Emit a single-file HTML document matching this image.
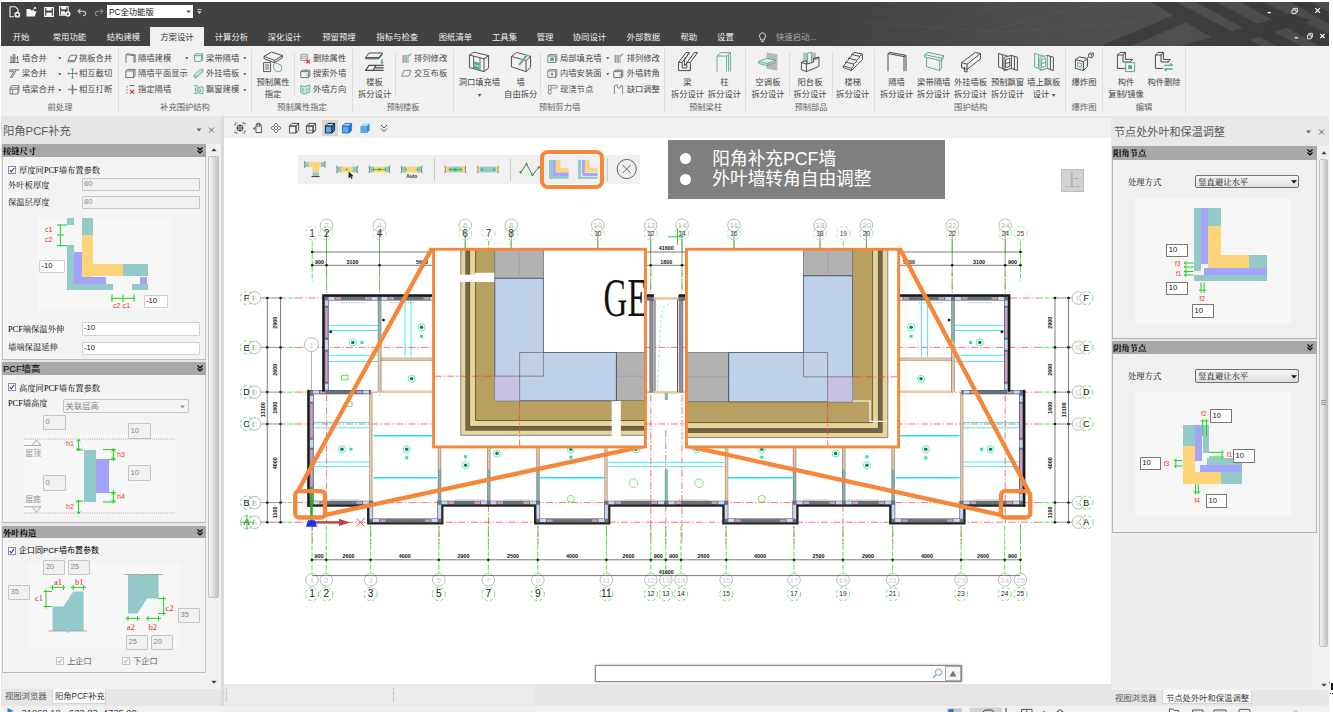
<!DOCTYPE html><html lang="zh"><head><meta charset="utf-8"><title>PC</title><style>
*{box-sizing:border-box;margin:0;padding:0}
html,body{width:1333px;height:712px;overflow:hidden;background:#fff}
body{position:relative;font-family:"Liberation Sans","Noto Sans CJK SC",sans-serif;font-size:8.3px;color:#333;line-height:1}
.a{position:absolute}
.t{position:absolute;white-space:nowrap;line-height:10px;height:10px}
.c{transform:translateX(-50%)}
svg{position:absolute;overflow:visible}
</style></head><body>
<div class="a" style="left:1px;top:2px;width:1328px;height:44px;background:#424242"></div>
<div class="a" style="left:830px;top:2px;width:499px;height:44px;background:linear-gradient(90deg,rgba(255,255,255,0),rgba(255,255,255,0.055) 35%,rgba(255,255,255,0.075) 70%,rgba(255,255,255,0.05))"></div>
<svg style="left:1px;top:2px" width="1328" height="44" viewBox="0 0 1328 44"><g fill="#000" opacity="0.22"><polygon points="1150,0 1175,0 1260,44 1225,44"/><polygon points="1195,0 1215,0 1300,44 1275,44"/><polygon points="1240,0 1262,0 1328,32 1328,44 1318,44"/><polygon points="1290,0 1310,0 1328,10 1328,22"/><polygon points="1100,44 1180,10 1200,14 1130,44"/><polygon points="1180,44 1290,12 1310,18 1230,44"/></g><g stroke="#fff" stroke-width="0.6" opacity="0.07" fill="none"><path d="M880 44 L1010 0 M930 44 L1100 0 M990 0 L1060 44 M1040 0 L1130 44 M860 20 L1000 30 L1140 20"/></g></svg>
<div class="a" style="left:150px;top:27px;width:54px;height:19px;background:#f1f1f1"></div>
<div class="t c" style="left:21.0px;top:32px;color:#f0f0f0;font-size:8.4px">开始</div>
<div class="t c" style="left:69.5px;top:32px;color:#f0f0f0;font-size:8.4px">常用功能</div>
<div class="t c" style="left:123.5px;top:32px;color:#f0f0f0;font-size:8.4px">结构建模</div>
<div class="t c" style="left:177.0px;top:32px;color:#333;font-size:8.4px">方案设计</div>
<div class="t c" style="left:231.5px;top:32px;color:#f0f0f0;font-size:8.4px">计算分析</div>
<div class="t c" style="left:284.5px;top:32px;color:#f0f0f0;font-size:8.4px">深化设计</div>
<div class="t c" style="left:339.0px;top:32px;color:#f0f0f0;font-size:8.4px">预留预埋</div>
<div class="t c" style="left:397.3px;top:32px;color:#f0f0f0;font-size:8.4px">指标与检查</div>
<div class="t c" style="left:455.5px;top:32px;color:#f0f0f0;font-size:8.4px">图纸清单</div>
<div class="t c" style="left:504.5px;top:32px;color:#f0f0f0;font-size:8.4px">工具集</div>
<div class="t c" style="left:545.0px;top:32px;color:#f0f0f0;font-size:8.4px">管理</div>
<div class="t c" style="left:589.5px;top:32px;color:#f0f0f0;font-size:8.4px">协同设计</div>
<div class="t c" style="left:643.5px;top:32px;color:#f0f0f0;font-size:8.4px">外部数据</div>
<div class="t c" style="left:688.8px;top:32px;color:#f0f0f0;font-size:8.4px">帮助</div>
<div class="t c" style="left:725.4px;top:32px;color:#f0f0f0;font-size:8.4px">设置</div>
<div class="t" style="left:776px;top:32px;color:#a8a8a8;font-size:8.4px">快速启动...</div>
<div class="a" style="left:1px;top:46px;width:1328px;height:70px;background:#f1f1f1"></div>
<div class="a" style="left:117.5px;top:49px;width:1px;height:64px;background:#dcdcdc"></div>
<div class="a" style="left:250.5px;top:49px;width:1px;height:64px;background:#dcdcdc"></div>
<div class="a" style="left:351.5px;top:49px;width:1px;height:64px;background:#dcdcdc"></div>
<div class="a" style="left:452.5px;top:49px;width:1px;height:64px;background:#dcdcdc"></div>
<div class="a" style="left:663.5px;top:49px;width:1px;height:64px;background:#dcdcdc"></div>
<div class="a" style="left:745.2px;top:49px;width:1px;height:64px;background:#dcdcdc"></div>
<div class="a" style="left:874.3px;top:49px;width:1px;height:64px;background:#dcdcdc"></div>
<div class="a" style="left:1065.0px;top:49px;width:1px;height:64px;background:#dcdcdc"></div>
<div class="a" style="left:1102.0px;top:49px;width:1px;height:64px;background:#dcdcdc"></div>
<div class="a" style="left:1185.0px;top:49px;width:1px;height:64px;background:#dcdcdc"></div>
<div class="a" style="left:293.5px;top:53px;width:1px;height:43px;background:#dcdcdc"></div>
<div class="a" style="left:394.5px;top:53px;width:1px;height:43px;background:#dcdcdc"></div>
<div class="a" style="left:540.3px;top:53px;width:1px;height:43px;background:#dcdcdc"></div>
<div class="a" style="left:788.5px;top:53px;width:1px;height:43px;background:#dcdcdc"></div>
<div class="a" style="left:831.5px;top:53px;width:1px;height:43px;background:#dcdcdc"></div>
<div class="t c" style="left:60px;top:102px;color:#666">前处理</div>
<div class="t c" style="left:185px;top:102px;color:#666">补充围护结构</div>
<div class="t c" style="left:302px;top:102px;color:#666">预制属性指定</div>
<div class="t c" style="left:403px;top:102px;color:#666">预制楼板</div>
<div class="t c" style="left:559.5px;top:102px;color:#666">预制剪力墙</div>
<div class="t c" style="left:705.6px;top:102px;color:#666">预制梁柱</div>
<div class="t c" style="left:811px;top:102px;color:#666">预制部品</div>
<div class="t c" style="left:970.7px;top:102px;color:#666">围护结构</div>
<div class="t c" style="left:1084px;top:102px;color:#666">爆炸图</div>
<div class="t c" style="left:1144px;top:102px;color:#666">编辑</div>
<div class="t" style="left:22px;top:52.5px;color:#4a4a4a">墙合并</div>
<div class="t" style="left:22px;top:68px;color:#4a4a4a">梁合并</div>
<div class="t" style="left:22px;top:84px;color:#4a4a4a">墙梁合并</div>
<div class="t" style="left:79px;top:52.5px;color:#4a4a4a">挑板合并</div>
<div class="t" style="left:79px;top:68px;color:#4a4a4a">相互截切</div>
<div class="t" style="left:79px;top:84px;color:#4a4a4a">相互打断</div>
<div class="t" style="left:138px;top:52.5px;color:#4a4a4a">隔墙建模</div>
<div class="t" style="left:138px;top:68px;color:#4a4a4a">隔墙平面显示</div>
<div class="t" style="left:138px;top:84px;color:#4a4a4a">指定隔墙</div>
<div class="t" style="left:206px;top:52.5px;color:#4a4a4a">梁带隔墙</div>
<div class="t" style="left:206px;top:68px;color:#4a4a4a">外挂墙板</div>
<div class="t" style="left:206px;top:84px;color:#4a4a4a">飘窗建模</div>
<div class="t" style="left:313px;top:52.5px;color:#4a4a4a">删除属性</div>
<div class="t" style="left:313px;top:68px;color:#4a4a4a">搜索外墙</div>
<div class="t" style="left:313px;top:84px;color:#4a4a4a">外墙方向</div>
<div class="t" style="left:414px;top:52.5px;color:#4a4a4a">排列修改</div>
<div class="t" style="left:414px;top:68px;color:#4a4a4a">交互布板</div>
<div class="t" style="left:560px;top:52.5px;color:#4a4a4a">局部填充墙</div>
<div class="t" style="left:560px;top:68px;color:#4a4a4a">内墙安装面</div>
<div class="t" style="left:560px;top:84px;color:#4a4a4a">现浇节点</div>
<div class="t" style="left:626.7px;top:52.5px;color:#4a4a4a">排列修改</div>
<div class="t" style="left:626.7px;top:68px;color:#4a4a4a">外墙转角</div>
<div class="t" style="left:626.7px;top:84px;color:#4a4a4a">缺口调整</div>
<div class="t c" style="left:273px;top:77px;color:#444">预制属性</div>
<div class="t c" style="left:273px;top:89px;color:#444">指定</div>
<div class="t c" style="left:374.6px;top:77px;color:#444">楼板</div>
<div class="t c" style="left:374.6px;top:89px;color:#444">拆分设计</div>
<div class="t c" style="left:479.4px;top:77px;color:#444">洞口填充墙</div>
<div class="t c" style="left:479.4px;top:89px;color:#444"><span style="font-size:5.5px">▾</span></div>
<div class="t c" style="left:520.7px;top:77px;color:#444">墙</div>
<div class="t c" style="left:520.7px;top:89px;color:#444">自由拆分</div>
<div class="t c" style="left:687.5px;top:77px;color:#444">梁</div>
<div class="t c" style="left:687.5px;top:89px;color:#444">拆分设计</div>
<div class="t c" style="left:724.4px;top:77px;color:#444">柱</div>
<div class="t c" style="left:724.4px;top:89px;color:#444">拆分设计</div>
<div class="t c" style="left:768px;top:77px;color:#444">空调板</div>
<div class="t c" style="left:768px;top:89px;color:#444">拆分设计</div>
<div class="t c" style="left:810px;top:77px;color:#444">阳台板</div>
<div class="t c" style="left:810px;top:89px;color:#444">拆分设计</div>
<div class="t c" style="left:852.7px;top:77px;color:#444">楼梯</div>
<div class="t c" style="left:852.7px;top:89px;color:#444">拆分设计</div>
<div class="t c" style="left:896.6px;top:77px;color:#444">隔墙</div>
<div class="t c" style="left:896.6px;top:89px;color:#444">拆分设计</div>
<div class="t c" style="left:933.7px;top:77px;color:#444">梁带隔墙</div>
<div class="t c" style="left:933.7px;top:89px;color:#444">拆分设计</div>
<div class="t c" style="left:970.5px;top:77px;color:#444">外挂墙板</div>
<div class="t c" style="left:970.5px;top:89px;color:#444">拆分设计</div>
<div class="t c" style="left:1007.5px;top:77px;color:#444">预制飘窗</div>
<div class="t c" style="left:1007.5px;top:89px;color:#444">拆分设计</div>
<div class="t c" style="left:1043.7px;top:77px;color:#444">墙上飘板</div>
<div class="t c" style="left:1043.7px;top:89px;color:#444">设计 <span style="font-size:5.5px">▾</span></div>
<div class="t c" style="left:1084px;top:77px;color:#444">爆炸图</div>
<div class="t c" style="left:1126px;top:77px;color:#444">构件</div>
<div class="t c" style="left:1126px;top:89px;color:#444">复制/镜像</div>
<div class="t c" style="left:1164px;top:77px;color:#444">构件删除</div>
<div class="a" style="left:1.0px;top:116.0px;width:1328.0px;height:2.3px;background:#e4e4e4;"></div>
<div class="a" style="left:224.0px;top:118.3px;width:887.0px;height:19.9px;background:#f0f0f0;"></div>
<div class="a" style="left:224.0px;top:138.2px;width:887.0px;height:545.6px;background:#fff;"></div>
<div class="a" style="left:224.0px;top:683.8px;width:887.0px;height:22.2px;background:#e4e4e4;"></div>
<div class="a" style="left:224.0px;top:683.8px;width:311.0px;height:22.2px;background:#ebebeb;"></div>
<div class="a" style="left:1.0px;top:706.0px;width:1328.0px;height:6.0px;background:#f0f0f0;"></div>
<svg style="left:224px;top:684px" width="400" height="21" viewBox="224 684 400 21"><path d="M226.3 688 V703 M393.5 688 V703" stroke="#999" stroke-width="1" stroke-dasharray="1 1.5"/></svg>
<svg style="left:224px;top:138.2px" width="887" height="545.8" viewBox="224 138.2 887 545.8" font-family="Liberation Sans, sans-serif"><g stroke="#f03a3a" stroke-width="0.7" stroke-dasharray="7 2 1.5 2" fill="none"><path d="M296 298.2 H323 M1010 298.2 H1038 M296 347.6 H1038 M296 392.3 H1038 M296 424.2 H1038 M296 502.8 H1038 M296 522.4 H1038"/><path d="M326.6 270 V523"/><path d="M379.5 270 V396"/><path d="M650.8 270 V545"/><path d="M682 270 V545"/><path d="M952.2 270 V396"/><path d="M1005.2 270 V523"/><path d="M370.8 430 V545"/><path d="M439.2 430 V545"/><path d="M488.5 430 V545"/><path d="M538 430 V545"/><path d="M606.4 430 V545"/><path d="M665.8 430 V545"/><path d="M725.8 430 V545"/><path d="M794 430 V545"/><path d="M843 430 V545"/><path d="M892.8 430 V545"/><path d="M961.3 430 V545"/><path d="M312.2 524 V545 M1020.5 524 V545"/></g><g><g stroke="#20e0f0" stroke-width="0.8" fill="none"><path d="M329 325.6 H378 M329 330.7 H378 M329 355.5 H378 M329 361.7 H378 M405 298 V357 M411 298 V357"/><path d="M312 422.7 H369 M312 428 H369 M312 462.2 H369 M312 466.8 H369"/><path d="M608 462.6 H666 M608 466.8 H666"/></g><g stroke="#20e0f0" stroke-width="1.4" fill="none"><path d="M373 436 H437 M373 478 H437 M540 478 H605"/></g><path d="M657 393 C660 340 660 320 663 308 L672 302" stroke="#60e8f0" stroke-width="0.8" stroke-dasharray="3 2" fill="none"/><g stroke="#e9c9a4" stroke-width="2.6" fill="none"><path d="M380 359.5 H436 M379.8 342 V392 M381 392 H436 M370.8 393 V503 M439.5 440 V470 M488.8 440 V470 M538 440 V470 M606 440 V503 M654 298.5 H679 M654 392.5 H679"/></g><g stroke="#8a7a6a" stroke-width="0.5" fill="none"><path d="M380 358.2 H436 M380 360.8 H436 M369.5 393 V503 M372.1 393 V503 M604.7 440 V503 M607.3 440 V503"/></g><g stroke="#86b4b4" stroke-width="2.6" fill="none"><path d="M379.5 300 V342 M439.5 470 V503 M488.8 470 V503 M538 470 V503 M666 470 V503 M666 393 V400"/></g><g stroke="#555" stroke-width="0.5" fill="none"><path d="M378.2 300 V392 M381.1 300 V392 M438.2 440 V503 M440.8 440 V503 M487.5 440 V503 M490.1 440 V503 M536.7 440 V503 M539.3 440 V503"/></g><g stroke="#9a8aa0" stroke-width="3" fill="none"><path d="M651.5 298 V393"/></g><g stroke="#444" stroke-width="0.6" fill="none"><path d="M649.8 298 V393 M653.2 298 V393"/></g><g stroke="#4a4a4a" stroke-width="4.2" fill="none" stroke-linejoin="miter"><path d="M326.5 392 V298.6 H654"/><path d="M311.5 394 V502"/><path d="M309.5 392.3 H371"/><path d="M309.5 503 H371 V520.8 H439.5 V503 H538 V520.8 H606.4 V503 H667"/></g><g stroke="#66737f" stroke-width="3.4" fill="none" stroke-linejoin="miter"><path d="M326.5 392 V298.6 H654"/><path d="M311.5 394 V502"/><path d="M309.5 392.3 H371"/><path d="M309.5 503 H371 V520.8 H439.5 V503 H538 V520.8 H606.4 V503 H667"/></g><path d="M313.5 503 h6 M369 503 h-6 M373 520.8 h6 M437.5 520.8 h-6 M441.5 503 h6 M487 503 h-6 M490.5 503 h6 M536 503 h-6 M540 520.8 h6 M604.4 520.8 h-6 M608.4 503 h6 M664 503 h-6 M313 392.3 h6 M369 392.3 h-6 M328.5 298.6 h6 M377.5 298.6 h-6 M381.5 298.6 h6 M436 298.6 h-6 M371 505 V519 M439.5 505 V519 M538 505 V519 M606.4 505 V519 M326.5 300.6 V306 M326.5 340 V350 M326.5 384 V390 M311.5 396 V402 M311.5 440 V448 M311.5 494 V501" stroke="#c8d4f8" stroke-width="3" fill="none"/><path d="M320.5 503 h5.5 M362 503 h-5.5 M380 520.8 h5.5 M430.5 520.8 h-5.5 M448.5 503 h5.5 M480 503 h-5.5 M497.5 503 h5.5 M529 503 h-5.5 M547 520.8 h5.5 M597.4 520.8 h-5.5 M615.4 503 h5.5 M657 503 h-5.5 M320 392.3 h5.5 M362 392.3 h-5.5 M335.5 298.6 h5.5 M370.5 298.6 h-5.5 M388.5 298.6 h5.5 M429 298.6 h-5.5 M326.5 308 V338 M326.5 352 V382 M311.5 404 V438 M311.5 450 V492" stroke="#cf9fc8" stroke-width="2.4" fill="none"/><g stroke="#1a1a1a" stroke-width="2.4" fill="none" stroke-linejoin="miter"><path d="M323.4 392 V295.7 H654"/><path d="M308.4 390 V507"/></g><g stroke="#2a261c" stroke-width="2.1" fill="none" stroke-linejoin="miter"><path d="M307.3 505.9 H368.1 V523.7 H442.4 V505.9 H535.1 V523.7 H609.3 V505.9 H667"/></g><path d="M655 300 V392" stroke="#222" stroke-width="0.8" fill="none"/><circle cx="352.8" cy="342.7" r="3.6" fill="none" stroke="#20e0b0" stroke-width="0.7"/><circle cx="352.8" cy="342.7" r="1.8" fill="#108060"/><circle cx="421.5" cy="327.5" r="3.6" fill="none" stroke="#20e0b0" stroke-width="0.7"/><circle cx="421.5" cy="327.5" r="1.8" fill="#108060"/><circle cx="411.6" cy="379" r="3.6" fill="none" stroke="#20e0b0" stroke-width="0.7"/><circle cx="411.6" cy="379" r="1.8" fill="#108060"/><circle cx="342" cy="449.4" r="3.6" fill="none" stroke="#20e0b0" stroke-width="0.7"/><circle cx="342" cy="449.4" r="1.8" fill="#108060"/><circle cx="406.8" cy="449.4" r="3.6" fill="none" stroke="#20e0b0" stroke-width="0.7"/><circle cx="406.8" cy="449.4" r="1.8" fill="#108060"/><circle cx="465.6" cy="465.4" r="3.6" fill="none" stroke="#20e0b0" stroke-width="0.7"/><circle cx="465.6" cy="465.4" r="1.8" fill="#108060"/><circle cx="497" cy="453.6" r="3.6" fill="none" stroke="#20e0b0" stroke-width="0.7"/><circle cx="497" cy="453.6" r="1.8" fill="#108060"/><circle cx="570.8" cy="449.5" r="3.6" fill="none" stroke="#20e0b0" stroke-width="0.7"/><circle cx="570.8" cy="449.5" r="1.8" fill="#108060"/><circle cx="636" cy="449.5" r="3.6" fill="none" stroke="#20e0b0" stroke-width="0.7"/><circle cx="636" cy="449.5" r="1.8" fill="#108060"/><rect x="360.5" y="341.2" width="3" height="3" fill="#20e0b0"/><rect x="420.0" y="335.0" width="3" height="3" fill="#20e0b0"/><rect x="349.5" y="447.9" width="3" height="3" fill="#20e0b0"/><rect x="405.3" y="456.5" width="3" height="3" fill="#20e0b0"/><rect x="464.1" y="455.5" width="3" height="3" fill="#20e0b0"/><rect x="495.5" y="444.0" width="3" height="3" fill="#20e0b0"/><rect x="569.3" y="456.0" width="3" height="3" fill="#20e0b0"/><rect x="341.6" y="375.5" width="6.4" height="4.5" fill="none" stroke="#30e030" stroke-width="0.8"/><rect x="346" y="402" width="6" height="4.5" fill="none" stroke="#30e030" stroke-width="0.8"/><circle cx="633.5" cy="483.4" r="4.3" fill="none" stroke="#60e040" stroke-width="0.8"/><circle cx="570.8" cy="499" r="3.4" fill="none" stroke="#60e040" stroke-width="0.8"/><circle cx="330.7" cy="332" r="1.4" fill="#111"/><circle cx="383.5" cy="320.3" r="1.4" fill="#111"/><g stroke="#999" stroke-width="0.7" stroke-dasharray="1.5 1" fill="none"><path d="M341 303 H366 M390 303 H415 M330 500 H360 M386 519 H416 M455 500 H485 M505 500 H530 M555 519 H585 M625 500 H655"/></g></g><g transform="translate(1332.6,0) scale(-1,1)"><g stroke="#20e0f0" stroke-width="0.8" fill="none"><path d="M329 325.6 H378 M329 330.7 H378 M329 355.5 H378 M329 361.7 H378 M405 298 V357 M411 298 V357"/><path d="M312 422.7 H369 M312 428 H369 M312 462.2 H369 M312 466.8 H369"/><path d="M608 462.6 H666 M608 466.8 H666"/></g><g stroke="#20e0f0" stroke-width="1.4" fill="none"><path d="M373 436 H437 M373 478 H437 M540 478 H605"/></g><g stroke="#e9c9a4" stroke-width="2.6" fill="none"><path d="M380 359.5 H436 M379.8 342 V392 M381 392 H436 M370.8 393 V503 M439.5 440 V470 M488.8 440 V470 M538 440 V470 M606 440 V503 M654 298.5 H679 M654 392.5 H679"/></g><g stroke="#8a7a6a" stroke-width="0.5" fill="none"><path d="M380 358.2 H436 M380 360.8 H436 M369.5 393 V503 M372.1 393 V503 M604.7 440 V503 M607.3 440 V503"/></g><g stroke="#86b4b4" stroke-width="2.6" fill="none"><path d="M379.5 300 V342 M439.5 470 V503 M488.8 470 V503 M538 470 V503 M666 470 V503 M666 393 V400"/></g><g stroke="#555" stroke-width="0.5" fill="none"><path d="M378.2 300 V392 M381.1 300 V392 M438.2 440 V503 M440.8 440 V503 M487.5 440 V503 M490.1 440 V503 M536.7 440 V503 M539.3 440 V503"/></g><g stroke="#9a8aa0" stroke-width="3" fill="none"><path d="M651.5 298 V393"/></g><g stroke="#444" stroke-width="0.6" fill="none"><path d="M649.8 298 V393 M653.2 298 V393"/></g><g stroke="#4a4a4a" stroke-width="4.2" fill="none" stroke-linejoin="miter"><path d="M326.5 392 V298.6 H654"/><path d="M311.5 394 V502"/><path d="M309.5 392.3 H371"/><path d="M309.5 503 H371 V520.8 H439.5 V503 H538 V520.8 H606.4 V503 H667"/></g><g stroke="#66737f" stroke-width="3.4" fill="none" stroke-linejoin="miter"><path d="M326.5 392 V298.6 H654"/><path d="M311.5 394 V502"/><path d="M309.5 392.3 H371"/><path d="M309.5 503 H371 V520.8 H439.5 V503 H538 V520.8 H606.4 V503 H667"/></g><path d="M313.5 503 h6 M369 503 h-6 M373 520.8 h6 M437.5 520.8 h-6 M441.5 503 h6 M487 503 h-6 M490.5 503 h6 M536 503 h-6 M540 520.8 h6 M604.4 520.8 h-6 M608.4 503 h6 M664 503 h-6 M313 392.3 h6 M369 392.3 h-6 M328.5 298.6 h6 M377.5 298.6 h-6 M381.5 298.6 h6 M436 298.6 h-6 M371 505 V519 M439.5 505 V519 M538 505 V519 M606.4 505 V519 M326.5 300.6 V306 M326.5 340 V350 M326.5 384 V390 M311.5 396 V402 M311.5 440 V448 M311.5 494 V501" stroke="#c8d4f8" stroke-width="3" fill="none"/><path d="M320.5 503 h5.5 M362 503 h-5.5 M380 520.8 h5.5 M430.5 520.8 h-5.5 M448.5 503 h5.5 M480 503 h-5.5 M497.5 503 h5.5 M529 503 h-5.5 M547 520.8 h5.5 M597.4 520.8 h-5.5 M615.4 503 h5.5 M657 503 h-5.5 M320 392.3 h5.5 M362 392.3 h-5.5 M335.5 298.6 h5.5 M370.5 298.6 h-5.5 M388.5 298.6 h5.5 M429 298.6 h-5.5 M326.5 308 V338 M326.5 352 V382 M311.5 404 V438 M311.5 450 V492" stroke="#cf9fc8" stroke-width="2.4" fill="none"/><g stroke="#1a1a1a" stroke-width="2.4" fill="none" stroke-linejoin="miter"><path d="M323.4 392 V295.7 H654"/><path d="M308.4 390 V507"/></g><g stroke="#2a261c" stroke-width="2.1" fill="none" stroke-linejoin="miter"><path d="M307.3 505.9 H368.1 V523.7 H442.4 V505.9 H535.1 V523.7 H609.3 V505.9 H667"/></g><path d="M655 300 V392" stroke="#222" stroke-width="0.8" fill="none"/><circle cx="352.8" cy="342.7" r="3.6" fill="none" stroke="#20e0b0" stroke-width="0.7"/><circle cx="352.8" cy="342.7" r="1.8" fill="#108060"/><circle cx="421.5" cy="327.5" r="3.6" fill="none" stroke="#20e0b0" stroke-width="0.7"/><circle cx="421.5" cy="327.5" r="1.8" fill="#108060"/><circle cx="411.6" cy="379" r="3.6" fill="none" stroke="#20e0b0" stroke-width="0.7"/><circle cx="411.6" cy="379" r="1.8" fill="#108060"/><circle cx="342" cy="449.4" r="3.6" fill="none" stroke="#20e0b0" stroke-width="0.7"/><circle cx="342" cy="449.4" r="1.8" fill="#108060"/><circle cx="406.8" cy="449.4" r="3.6" fill="none" stroke="#20e0b0" stroke-width="0.7"/><circle cx="406.8" cy="449.4" r="1.8" fill="#108060"/><circle cx="465.6" cy="465.4" r="3.6" fill="none" stroke="#20e0b0" stroke-width="0.7"/><circle cx="465.6" cy="465.4" r="1.8" fill="#108060"/><circle cx="497" cy="453.6" r="3.6" fill="none" stroke="#20e0b0" stroke-width="0.7"/><circle cx="497" cy="453.6" r="1.8" fill="#108060"/><circle cx="570.8" cy="449.5" r="3.6" fill="none" stroke="#20e0b0" stroke-width="0.7"/><circle cx="570.8" cy="449.5" r="1.8" fill="#108060"/><circle cx="636" cy="449.5" r="3.6" fill="none" stroke="#20e0b0" stroke-width="0.7"/><circle cx="636" cy="449.5" r="1.8" fill="#108060"/><rect x="360.5" y="341.2" width="3" height="3" fill="#20e0b0"/><rect x="420.0" y="335.0" width="3" height="3" fill="#20e0b0"/><rect x="349.5" y="447.9" width="3" height="3" fill="#20e0b0"/><rect x="405.3" y="456.5" width="3" height="3" fill="#20e0b0"/><rect x="464.1" y="455.5" width="3" height="3" fill="#20e0b0"/><rect x="495.5" y="444.0" width="3" height="3" fill="#20e0b0"/><rect x="569.3" y="456.0" width="3" height="3" fill="#20e0b0"/><circle cx="633.5" cy="483.4" r="4.3" fill="none" stroke="#60e040" stroke-width="0.8"/><circle cx="570.8" cy="499" r="3.4" fill="none" stroke="#60e040" stroke-width="0.8"/><circle cx="330.7" cy="332" r="1.4" fill="#111"/><circle cx="383.5" cy="320.3" r="1.4" fill="#111"/><g stroke="#999" stroke-width="0.7" stroke-dasharray="1.5 1" fill="none"><path d="M341 303 H366 M390 303 H415 M330 500 H360 M386 519 H416 M455 500 H485 M505 500 H530 M555 519 H585 M625 500 H655"/></g></g><circle cx="312.2" cy="233.3" r="6.6" fill="none" stroke="#6fe46f" stroke-width="0.65" stroke-dasharray="3 2.5"/><path d="M312.2 241 V281" stroke="#30d830" stroke-width="0.8" stroke-dasharray="5 1.5"/><text x="312.2" y="237.5" font-size="10.2" fill="#3a3a3a" text-anchor="middle">1</text><circle cx="326.5" cy="225.5" r="6.3" fill="#fff" stroke="#aaa" stroke-width="0.8"/><text x="326.5" y="228.5" font-size="8" fill="#bbb" text-anchor="middle">2</text><path d="M326.5 231.8 V266" stroke="#666" stroke-width="0.7"/><circle cx="326.5" cy="233.3" r="6.6" fill="none" stroke="#6fe46f" stroke-width="0.65" stroke-dasharray="3 2.5"/><path d="M326.5 241 V252" stroke="#30d830" stroke-width="0.8"/><path d="M326.5 266 V290" stroke="#30d830" stroke-width="0.8" stroke-dasharray="5 1.5"/><text x="326.5" y="237.5" font-size="10.2" fill="#3a3a3a" text-anchor="middle">2</text><circle cx="379.5" cy="225.5" r="6.3" fill="#fff" stroke="#aaa" stroke-width="0.8"/><text x="379.5" y="228.5" font-size="8" fill="#bbb" text-anchor="middle">4</text><path d="M379.5 231.8 V266" stroke="#666" stroke-width="0.7"/><circle cx="379.5" cy="233.3" r="6.6" fill="none" stroke="#6fe46f" stroke-width="0.65" stroke-dasharray="3 2.5"/><path d="M379.5 241 V252" stroke="#30d830" stroke-width="0.8"/><path d="M379.5 266 V290" stroke="#30d830" stroke-width="0.8" stroke-dasharray="5 1.5"/><text x="379.5" y="237.5" font-size="10.2" fill="#3a3a3a" text-anchor="middle">4</text><circle cx="465.2" cy="225.5" r="6.3" fill="#fff" stroke="#aaa" stroke-width="0.8"/><text x="465.2" y="228.5" font-size="8" fill="#bbb" text-anchor="middle">6</text><path d="M465.2 231.8 V266" stroke="#666" stroke-width="0.7"/><circle cx="465.2" cy="233.3" r="6.6" fill="none" stroke="#6fe46f" stroke-width="0.65" stroke-dasharray="3 2.5"/><path d="M465.2 241 V252" stroke="#30d830" stroke-width="0.8"/><path d="M465.2 266 V290" stroke="#30d830" stroke-width="0.8" stroke-dasharray="5 1.5"/><text x="465.2" y="237.5" font-size="10.2" fill="#3a3a3a" text-anchor="middle">6</text><circle cx="488.6" cy="233.3" r="6.6" fill="none" stroke="#6fe46f" stroke-width="0.65" stroke-dasharray="3 2.5"/><path d="M488.6 241 V281" stroke="#30d830" stroke-width="0.8" stroke-dasharray="5 1.5"/><text x="488.6" y="237.5" font-size="10.2" fill="#3a3a3a" text-anchor="middle">7</text><circle cx="511.2" cy="225.5" r="6.3" fill="#fff" stroke="#aaa" stroke-width="0.8"/><text x="511.2" y="228.5" font-size="8" fill="#bbb" text-anchor="middle">8</text><path d="M511.2 231.8 V266" stroke="#666" stroke-width="0.7"/><circle cx="511.2" cy="233.3" r="6.6" fill="none" stroke="#6fe46f" stroke-width="0.65" stroke-dasharray="3 2.5"/><path d="M511.2 241 V252" stroke="#30d830" stroke-width="0.8"/><path d="M511.2 266 V290" stroke="#30d830" stroke-width="0.8" stroke-dasharray="5 1.5"/><text x="511.2" y="237.5" font-size="10.2" fill="#3a3a3a" text-anchor="middle">8</text><circle cx="597.8" cy="225.5" r="6.3" fill="#fff" stroke="#aaa" stroke-width="0.8"/><text x="597.8" y="228.5" font-size="8" fill="#bbb" text-anchor="middle">10</text><path d="M597.8 231.8 V266" stroke="#666" stroke-width="0.7"/><circle cx="597.8" cy="233.3" r="6.6" fill="none" stroke="#6fe46f" stroke-width="0.65" stroke-dasharray="3 2.5"/><path d="M597.8 241 V252" stroke="#30d830" stroke-width="0.8"/><path d="M597.8 266 V290" stroke="#30d830" stroke-width="0.8" stroke-dasharray="5 1.5"/><text x="597.8" y="236.6" font-size="6.6" fill="#3a3a3a" text-anchor="middle">10</text><circle cx="650.7" cy="225.5" r="6.3" fill="#fff" stroke="#aaa" stroke-width="0.8"/><text x="650.7" y="228.5" font-size="8" fill="#bbb" text-anchor="middle">12</text><path d="M650.7 231.8 V266" stroke="#666" stroke-width="0.7"/><circle cx="650.7" cy="233.3" r="6.6" fill="none" stroke="#6fe46f" stroke-width="0.65" stroke-dasharray="3 2.5"/><path d="M650.7 241 V252" stroke="#30d830" stroke-width="0.8"/><path d="M650.7 266 V290" stroke="#30d830" stroke-width="0.8" stroke-dasharray="5 1.5"/><text x="650.7" y="236.6" font-size="6.6" fill="#3a3a3a" text-anchor="middle">12</text><circle cx="682" cy="225.5" r="6.3" fill="#fff" stroke="#aaa" stroke-width="0.8"/><text x="682" y="228.5" font-size="8" fill="#bbb" text-anchor="middle">14</text><path d="M682 231.8 V266" stroke="#666" stroke-width="0.7"/><circle cx="682" cy="233.3" r="6.6" fill="none" stroke="#6fe46f" stroke-width="0.65" stroke-dasharray="3 2.5"/><path d="M682 241 V252" stroke="#30d830" stroke-width="0.8"/><path d="M682 266 V290" stroke="#30d830" stroke-width="0.8" stroke-dasharray="5 1.5"/><text x="682" y="236.6" font-size="6.6" fill="#3a3a3a" text-anchor="middle">14</text><circle cx="734" cy="225.5" r="6.3" fill="#fff" stroke="#aaa" stroke-width="0.8"/><text x="734" y="228.5" font-size="8" fill="#bbb" text-anchor="middle">16</text><path d="M734 231.8 V266" stroke="#666" stroke-width="0.7"/><circle cx="734" cy="233.3" r="6.6" fill="none" stroke="#6fe46f" stroke-width="0.65" stroke-dasharray="3 2.5"/><path d="M734 241 V252" stroke="#30d830" stroke-width="0.8"/><path d="M734 266 V290" stroke="#30d830" stroke-width="0.8" stroke-dasharray="5 1.5"/><text x="734" y="236.6" font-size="6.6" fill="#3a3a3a" text-anchor="middle">16</text><circle cx="820" cy="225.5" r="6.3" fill="#fff" stroke="#aaa" stroke-width="0.8"/><text x="820" y="228.5" font-size="8" fill="#bbb" text-anchor="middle">18</text><path d="M820 231.8 V266" stroke="#666" stroke-width="0.7"/><circle cx="820" cy="233.3" r="6.6" fill="none" stroke="#6fe46f" stroke-width="0.65" stroke-dasharray="3 2.5"/><path d="M820 241 V252" stroke="#30d830" stroke-width="0.8"/><path d="M820 266 V290" stroke="#30d830" stroke-width="0.8" stroke-dasharray="5 1.5"/><text x="820" y="236.6" font-size="6.6" fill="#3a3a3a" text-anchor="middle">18</text><circle cx="843.3" cy="233.3" r="6.6" fill="none" stroke="#6fe46f" stroke-width="0.65" stroke-dasharray="3 2.5"/><path d="M843.3 241 V281" stroke="#30d830" stroke-width="0.8" stroke-dasharray="5 1.5"/><text x="843.3" y="236.6" font-size="6.6" fill="#3a3a3a" text-anchor="middle">19</text><circle cx="866.4" cy="225.5" r="6.3" fill="#fff" stroke="#aaa" stroke-width="0.8"/><text x="866.4" y="228.5" font-size="8" fill="#bbb" text-anchor="middle">20</text><path d="M866.4 231.8 V266" stroke="#666" stroke-width="0.7"/><circle cx="866.4" cy="233.3" r="6.6" fill="none" stroke="#6fe46f" stroke-width="0.65" stroke-dasharray="3 2.5"/><path d="M866.4 241 V252" stroke="#30d830" stroke-width="0.8"/><path d="M866.4 266 V290" stroke="#30d830" stroke-width="0.8" stroke-dasharray="5 1.5"/><text x="866.4" y="236.6" font-size="6.6" fill="#3a3a3a" text-anchor="middle">20</text><circle cx="952.2" cy="225.5" r="6.3" fill="#fff" stroke="#aaa" stroke-width="0.8"/><text x="952.2" y="228.5" font-size="8" fill="#bbb" text-anchor="middle">22</text><path d="M952.2 231.8 V266" stroke="#666" stroke-width="0.7"/><circle cx="952.2" cy="233.3" r="6.6" fill="none" stroke="#6fe46f" stroke-width="0.65" stroke-dasharray="3 2.5"/><path d="M952.2 241 V252" stroke="#30d830" stroke-width="0.8"/><path d="M952.2 266 V290" stroke="#30d830" stroke-width="0.8" stroke-dasharray="5 1.5"/><text x="952.2" y="236.6" font-size="6.6" fill="#3a3a3a" text-anchor="middle">22</text><circle cx="1005.2" cy="225.5" r="6.3" fill="#fff" stroke="#aaa" stroke-width="0.8"/><text x="1005.2" y="228.5" font-size="8" fill="#bbb" text-anchor="middle">24</text><path d="M1005.2 231.8 V266" stroke="#666" stroke-width="0.7"/><circle cx="1005.2" cy="233.3" r="6.6" fill="none" stroke="#6fe46f" stroke-width="0.65" stroke-dasharray="3 2.5"/><path d="M1005.2 241 V252" stroke="#30d830" stroke-width="0.8"/><path d="M1005.2 266 V290" stroke="#30d830" stroke-width="0.8" stroke-dasharray="5 1.5"/><text x="1005.2" y="236.6" font-size="6.6" fill="#3a3a3a" text-anchor="middle">24</text><circle cx="1020.5" cy="233.3" r="6.6" fill="none" stroke="#6fe46f" stroke-width="0.65" stroke-dasharray="3 2.5"/><path d="M1020.5 241 V281" stroke="#30d830" stroke-width="0.8" stroke-dasharray="5 1.5"/><text x="1020.5" y="236.6" font-size="6.6" fill="#3a3a3a" text-anchor="middle">25</text><g stroke="#444" stroke-width="0.7" fill="none"><path d="M312.2 252.2 H1020.5 M312.2 265.5 H1020.5"/></g><circle cx="312.2" cy="265.5" r="1.3" fill="#111"/><circle cx="326.5" cy="265.5" r="1.3" fill="#111"/><circle cx="379.5" cy="265.5" r="1.3" fill="#111"/><circle cx="465.2" cy="265.5" r="1.3" fill="#111"/><circle cx="511.2" cy="265.5" r="1.3" fill="#111"/><circle cx="597.8" cy="265.5" r="1.3" fill="#111"/><circle cx="650.7" cy="265.5" r="1.3" fill="#111"/><circle cx="682" cy="265.5" r="1.3" fill="#111"/><circle cx="734" cy="265.5" r="1.3" fill="#111"/><circle cx="820" cy="265.5" r="1.3" fill="#111"/><circle cx="866.4" cy="265.5" r="1.3" fill="#111"/><circle cx="952.2" cy="265.5" r="1.3" fill="#111"/><circle cx="1005.2" cy="265.5" r="1.3" fill="#111"/><circle cx="1020.5" cy="265.5" r="1.3" fill="#111"/><circle cx="312.2" cy="252.2" r="1.3" fill="#111"/><circle cx="1020.5" cy="252.2" r="1.3" fill="#111"/><text x="319.5" y="264" font-size="5.4" fill="#111" text-anchor="middle" font-weight="bold">900</text><text x="352.5" y="264" font-size="5.4" fill="#111" text-anchor="middle" font-weight="bold">3100</text><text x="422" y="264" font-size="5.4" fill="#111" text-anchor="middle" font-weight="bold">5600</text><text x="666.3" y="264" font-size="5.4" fill="#111" text-anchor="middle" font-weight="bold">1800</text><text x="909" y="264" font-size="5.4" fill="#111" text-anchor="middle" font-weight="bold">5600</text><text x="979" y="264" font-size="5.4" fill="#111" text-anchor="middle" font-weight="bold">3100</text><text x="1012.5" y="264" font-size="5.4" fill="#111" text-anchor="middle" font-weight="bold">900</text><text x="666.3" y="250.5" font-size="5.4" fill="#111" text-anchor="middle" font-weight="bold">41600</text><path d="M312 526 V573" stroke="#30d830" stroke-width="0.8" stroke-dasharray="5 1.5"/><circle cx="312" cy="580" r="6.3" fill="#fff" fill-opacity="0.6" stroke="#aaa" stroke-width="0.8"/><text x="312" y="583" font-size="8" fill="#ccc" text-anchor="middle">1</text><circle cx="312" cy="594.3" r="6.6" fill="none" stroke="#30d830" stroke-width="0.7" stroke-dasharray="3 2.5"/><text x="312" y="597.6" font-size="10.2" fill="#222" text-anchor="middle">1</text><circle cx="312" cy="560" r="1.3" fill="#111"/><path d="M326.3 526 V573" stroke="#30d830" stroke-width="0.8" stroke-dasharray="5 1.5"/><circle cx="326.3" cy="580" r="6.3" fill="#fff" fill-opacity="0.6" stroke="#aaa" stroke-width="0.8"/><text x="326.3" y="583" font-size="8" fill="#ccc" text-anchor="middle">2</text><circle cx="326.3" cy="594.3" r="6.6" fill="none" stroke="#30d830" stroke-width="0.7" stroke-dasharray="3 2.5"/><text x="326.3" y="597.6" font-size="10.2" fill="#222" text-anchor="middle">2</text><circle cx="326.3" cy="560" r="1.3" fill="#111"/><path d="M370.6 526 V573" stroke="#30d830" stroke-width="0.8" stroke-dasharray="5 1.5"/><circle cx="370.6" cy="580" r="6.3" fill="#fff" fill-opacity="0.6" stroke="#aaa" stroke-width="0.8"/><text x="370.6" y="583" font-size="8" fill="#ccc" text-anchor="middle">3</text><circle cx="370.6" cy="594.3" r="6.6" fill="none" stroke="#30d830" stroke-width="0.7" stroke-dasharray="3 2.5"/><text x="370.6" y="597.6" font-size="10.2" fill="#222" text-anchor="middle">3</text><circle cx="370.6" cy="560" r="1.3" fill="#111"/><path d="M438.8 526 V573" stroke="#30d830" stroke-width="0.8" stroke-dasharray="5 1.5"/><circle cx="438.8" cy="580" r="6.3" fill="#fff" fill-opacity="0.6" stroke="#aaa" stroke-width="0.8"/><text x="438.8" y="583" font-size="8" fill="#ccc" text-anchor="middle">5</text><circle cx="438.8" cy="594.3" r="6.6" fill="none" stroke="#30d830" stroke-width="0.7" stroke-dasharray="3 2.5"/><text x="438.8" y="597.6" font-size="10.2" fill="#222" text-anchor="middle">5</text><circle cx="438.8" cy="560" r="1.3" fill="#111"/><path d="M488.3 526 V573" stroke="#30d830" stroke-width="0.8" stroke-dasharray="5 1.5"/><circle cx="488.3" cy="580" r="6.3" fill="#fff" fill-opacity="0.6" stroke="#aaa" stroke-width="0.8"/><text x="488.3" y="583" font-size="8" fill="#ccc" text-anchor="middle">7</text><circle cx="488.3" cy="594.3" r="6.6" fill="none" stroke="#30d830" stroke-width="0.7" stroke-dasharray="3 2.5"/><text x="488.3" y="597.6" font-size="10.2" fill="#222" text-anchor="middle">7</text><circle cx="488.3" cy="560" r="1.3" fill="#111"/><path d="M537.8 526 V573" stroke="#30d830" stroke-width="0.8" stroke-dasharray="5 1.5"/><circle cx="537.8" cy="580" r="6.3" fill="#fff" fill-opacity="0.6" stroke="#aaa" stroke-width="0.8"/><text x="537.8" y="583" font-size="8" fill="#ccc" text-anchor="middle">9</text><circle cx="537.8" cy="594.3" r="6.6" fill="none" stroke="#30d830" stroke-width="0.7" stroke-dasharray="3 2.5"/><text x="537.8" y="597.6" font-size="10.2" fill="#222" text-anchor="middle">9</text><circle cx="537.8" cy="560" r="1.3" fill="#111"/><path d="M606.4 526 V573" stroke="#30d830" stroke-width="0.8" stroke-dasharray="5 1.5"/><circle cx="606.4" cy="580" r="6.3" fill="#fff" fill-opacity="0.6" stroke="#aaa" stroke-width="0.8"/><text x="606.4" y="583" font-size="8" fill="#ccc" text-anchor="middle">11</text><circle cx="606.4" cy="594.3" r="6.6" fill="none" stroke="#30d830" stroke-width="0.7" stroke-dasharray="3 2.5"/><text x="606.4" y="597.6" font-size="10.2" fill="#222" text-anchor="middle">11</text><circle cx="606.4" cy="560" r="1.3" fill="#111"/><path d="M650.8 526 V573" stroke="#30d830" stroke-width="0.8" stroke-dasharray="5 1.5"/><circle cx="650.8" cy="580" r="6.3" fill="#fff" fill-opacity="0.6" stroke="#aaa" stroke-width="0.8"/><text x="650.8" y="583" font-size="8" fill="#ccc" text-anchor="middle">12</text><circle cx="650.8" cy="594.3" r="6.6" fill="none" stroke="#30d830" stroke-width="0.7" stroke-dasharray="3 2.5"/><text x="650.8" y="596.6" font-size="6.6" fill="#222" text-anchor="middle">12</text><circle cx="650.8" cy="560" r="1.3" fill="#111"/><path d="M665.8 526 V573" stroke="#30d830" stroke-width="0.8" stroke-dasharray="5 1.5"/><circle cx="665.8" cy="580" r="6.3" fill="#fff" fill-opacity="0.6" stroke="#aaa" stroke-width="0.8"/><text x="665.8" y="583" font-size="8" fill="#ccc" text-anchor="middle">13</text><circle cx="665.8" cy="594.3" r="6.6" fill="none" stroke="#30d830" stroke-width="0.7" stroke-dasharray="3 2.5"/><text x="665.8" y="596.6" font-size="6.6" fill="#222" text-anchor="middle">13</text><circle cx="665.8" cy="560" r="1.3" fill="#111"/><path d="M681 526 V573" stroke="#30d830" stroke-width="0.8" stroke-dasharray="5 1.5"/><circle cx="681" cy="580" r="6.3" fill="#fff" fill-opacity="0.6" stroke="#aaa" stroke-width="0.8"/><text x="681" y="583" font-size="8" fill="#ccc" text-anchor="middle">14</text><circle cx="681" cy="594.3" r="6.6" fill="none" stroke="#30d830" stroke-width="0.7" stroke-dasharray="3 2.5"/><text x="681" y="596.6" font-size="6.6" fill="#222" text-anchor="middle">14</text><circle cx="681" cy="560" r="1.3" fill="#111"/><path d="M726.2 526 V573" stroke="#30d830" stroke-width="0.8" stroke-dasharray="5 1.5"/><circle cx="726.2" cy="580" r="6.3" fill="#fff" fill-opacity="0.6" stroke="#aaa" stroke-width="0.8"/><text x="726.2" y="583" font-size="8" fill="#ccc" text-anchor="middle">15</text><circle cx="726.2" cy="594.3" r="6.6" fill="none" stroke="#30d830" stroke-width="0.7" stroke-dasharray="3 2.5"/><text x="726.2" y="596.6" font-size="6.6" fill="#222" text-anchor="middle">15</text><circle cx="726.2" cy="560" r="1.3" fill="#111"/><path d="M794 526 V573" stroke="#30d830" stroke-width="0.8" stroke-dasharray="5 1.5"/><circle cx="794" cy="580" r="6.3" fill="#fff" fill-opacity="0.6" stroke="#aaa" stroke-width="0.8"/><text x="794" y="583" font-size="8" fill="#ccc" text-anchor="middle">17</text><circle cx="794" cy="594.3" r="6.6" fill="none" stroke="#30d830" stroke-width="0.7" stroke-dasharray="3 2.5"/><text x="794" y="596.6" font-size="6.6" fill="#222" text-anchor="middle">17</text><circle cx="794" cy="560" r="1.3" fill="#111"/><path d="M843 526 V573" stroke="#30d830" stroke-width="0.8" stroke-dasharray="5 1.5"/><circle cx="843" cy="580" r="6.3" fill="#fff" fill-opacity="0.6" stroke="#aaa" stroke-width="0.8"/><text x="843" y="583" font-size="8" fill="#ccc" text-anchor="middle">19</text><circle cx="843" cy="594.3" r="6.6" fill="none" stroke="#30d830" stroke-width="0.7" stroke-dasharray="3 2.5"/><text x="843" y="596.6" font-size="6.6" fill="#222" text-anchor="middle">19</text><circle cx="843" cy="560" r="1.3" fill="#111"/><path d="M892.6 526 V573" stroke="#30d830" stroke-width="0.8" stroke-dasharray="5 1.5"/><circle cx="892.6" cy="580" r="6.3" fill="#fff" fill-opacity="0.6" stroke="#aaa" stroke-width="0.8"/><text x="892.6" y="583" font-size="8" fill="#ccc" text-anchor="middle">21</text><circle cx="892.6" cy="594.3" r="6.6" fill="none" stroke="#30d830" stroke-width="0.7" stroke-dasharray="3 2.5"/><text x="892.6" y="596.6" font-size="6.6" fill="#222" text-anchor="middle">21</text><circle cx="892.6" cy="560" r="1.3" fill="#111"/><path d="M961 526 V573" stroke="#30d830" stroke-width="0.8" stroke-dasharray="5 1.5"/><circle cx="961" cy="580" r="6.3" fill="#fff" fill-opacity="0.6" stroke="#aaa" stroke-width="0.8"/><text x="961" y="583" font-size="8" fill="#ccc" text-anchor="middle">23</text><circle cx="961" cy="594.3" r="6.6" fill="none" stroke="#30d830" stroke-width="0.7" stroke-dasharray="3 2.5"/><text x="961" y="596.6" font-size="6.6" fill="#222" text-anchor="middle">23</text><circle cx="961" cy="560" r="1.3" fill="#111"/><path d="M1004.7 526 V573" stroke="#30d830" stroke-width="0.8" stroke-dasharray="5 1.5"/><circle cx="1004.7" cy="580" r="6.3" fill="#fff" fill-opacity="0.6" stroke="#aaa" stroke-width="0.8"/><text x="1004.7" y="583" font-size="8" fill="#ccc" text-anchor="middle">24</text><circle cx="1004.7" cy="594.3" r="6.6" fill="none" stroke="#30d830" stroke-width="0.7" stroke-dasharray="3 2.5"/><text x="1004.7" y="596.6" font-size="6.6" fill="#222" text-anchor="middle">24</text><circle cx="1004.7" cy="560" r="1.3" fill="#111"/><path d="M1020.5 526 V573" stroke="#30d830" stroke-width="0.8" stroke-dasharray="5 1.5"/><circle cx="1020.5" cy="580" r="6.3" fill="#fff" fill-opacity="0.6" stroke="#aaa" stroke-width="0.8"/><text x="1020.5" y="583" font-size="8" fill="#ccc" text-anchor="middle">25</text><circle cx="1020.5" cy="594.3" r="6.6" fill="none" stroke="#30d830" stroke-width="0.7" stroke-dasharray="3 2.5"/><text x="1020.5" y="596.6" font-size="6.6" fill="#222" text-anchor="middle">25</text><circle cx="1020.5" cy="560" r="1.3" fill="#111"/><g stroke="#444" stroke-width="0.7" fill="none"><path d="M312 560 H1020.5 M312 575.8 H1020.5"/></g><text x="319" y="558" font-size="5.4" fill="#111" text-anchor="middle" font-weight="bold">900</text><text x="348.5" y="558" font-size="5.4" fill="#111" text-anchor="middle" font-weight="bold">2600</text><text x="404.7" y="558" font-size="5.4" fill="#111" text-anchor="middle" font-weight="bold">4000</text><text x="463.5" y="558" font-size="5.4" fill="#111" text-anchor="middle" font-weight="bold">2900</text><text x="513" y="558" font-size="5.4" fill="#111" text-anchor="middle" font-weight="bold">2500</text><text x="572" y="558" font-size="5.4" fill="#111" text-anchor="middle" font-weight="bold">4000</text><text x="628.6" y="558" font-size="5.4" fill="#111" text-anchor="middle" font-weight="bold">2600</text><text x="658.3" y="558" font-size="5.4" fill="#111" text-anchor="middle" font-weight="bold">900</text><text x="673.4" y="558" font-size="5.4" fill="#111" text-anchor="middle" font-weight="bold">900</text><text x="703.6" y="558" font-size="5.4" fill="#111" text-anchor="middle" font-weight="bold">2600</text><text x="760" y="558" font-size="5.4" fill="#111" text-anchor="middle" font-weight="bold">4000</text><text x="818.5" y="558" font-size="5.4" fill="#111" text-anchor="middle" font-weight="bold">2500</text><text x="868" y="558" font-size="5.4" fill="#111" text-anchor="middle" font-weight="bold">2900</text><text x="927" y="558" font-size="5.4" fill="#111" text-anchor="middle" font-weight="bold">4000</text><text x="983" y="558" font-size="5.4" fill="#111" text-anchor="middle" font-weight="bold">2600</text><text x="1012.6" y="558" font-size="5.4" fill="#111" text-anchor="middle" font-weight="bold">900</text><text x="666.3" y="573.8" font-size="5.4" fill="#111" text-anchor="middle" font-weight="bold">41600</text><path d="M261 298.2 H281" stroke="#666" stroke-width="0.7"/><path d="M281 298.2 H296" stroke="#30d830" stroke-width="0.8" stroke-dasharray="5 1.5"/><circle cx="254.5" cy="298.2" r="6.3" fill="#fff" stroke="#aaa" stroke-width="0.8"/><text x="254.5" y="301.2" font-size="8" fill="#ccc" text-anchor="middle">F</text><circle cx="247" cy="298.2" r="6.6" fill="none" stroke="#30d830" stroke-width="0.7" stroke-dasharray="3 2.5"/><text x="246.5" y="301.4" font-size="9" fill="#222" text-anchor="middle">F</text><circle cx="267.3" cy="298.2" r="1.3" fill="#111"/><circle cx="280.6" cy="298.2" r="1.3" fill="#111"/><path d="M1055 298.2 H1072" stroke="#666" stroke-width="0.7"/><path d="M1038 298.2 H1055" stroke="#30d830" stroke-width="0.8" stroke-dasharray="5 1.5"/><circle cx="1078.5" cy="298.2" r="6.3" fill="#fff" stroke="#aaa" stroke-width="0.8"/><text x="1078.5" y="301.2" font-size="8" fill="#ccc" text-anchor="middle">F</text><circle cx="1086.5" cy="298.2" r="6.6" fill="none" stroke="#30d830" stroke-width="0.7" stroke-dasharray="3 2.5"/><text x="1086.3" y="301.4" font-size="9" fill="#222" text-anchor="middle">F</text><circle cx="1055" cy="298.2" r="1.3" fill="#111"/><circle cx="1068.5" cy="298.2" r="1.3" fill="#111"/><path d="M261 347.6 H281" stroke="#666" stroke-width="0.7"/><path d="M281 347.6 H296" stroke="#30d830" stroke-width="0.8" stroke-dasharray="5 1.5"/><circle cx="254.5" cy="347.6" r="6.3" fill="#fff" stroke="#aaa" stroke-width="0.8"/><text x="254.5" y="350.6" font-size="8" fill="#ccc" text-anchor="middle">E</text><circle cx="247" cy="347.6" r="6.6" fill="none" stroke="#30d830" stroke-width="0.7" stroke-dasharray="3 2.5"/><text x="246.5" y="350.8" font-size="9" fill="#222" text-anchor="middle">E</text><circle cx="267.3" cy="347.6" r="1.3" fill="#111"/><circle cx="280.6" cy="347.6" r="1.3" fill="#111"/><path d="M1055 347.6 H1072" stroke="#666" stroke-width="0.7"/><path d="M1038 347.6 H1055" stroke="#30d830" stroke-width="0.8" stroke-dasharray="5 1.5"/><circle cx="1078.5" cy="347.6" r="6.3" fill="#fff" stroke="#aaa" stroke-width="0.8"/><text x="1078.5" y="350.6" font-size="8" fill="#ccc" text-anchor="middle">E</text><circle cx="1086.5" cy="347.6" r="6.6" fill="none" stroke="#30d830" stroke-width="0.7" stroke-dasharray="3 2.5"/><text x="1086.3" y="350.8" font-size="9" fill="#222" text-anchor="middle">E</text><circle cx="1055" cy="347.6" r="1.3" fill="#111"/><circle cx="1068.5" cy="347.6" r="1.3" fill="#111"/><path d="M261 392.3 H281" stroke="#666" stroke-width="0.7"/><path d="M281 392.3 H296" stroke="#30d830" stroke-width="0.8" stroke-dasharray="5 1.5"/><circle cx="254.5" cy="392.3" r="6.3" fill="#fff" stroke="#aaa" stroke-width="0.8"/><text x="254.5" y="395.3" font-size="8" fill="#ccc" text-anchor="middle">D</text><circle cx="247" cy="392.3" r="6.6" fill="none" stroke="#30d830" stroke-width="0.7" stroke-dasharray="3 2.5"/><text x="246.5" y="395.5" font-size="9" fill="#222" text-anchor="middle">D</text><circle cx="267.3" cy="392.3" r="1.3" fill="#111"/><circle cx="280.6" cy="392.3" r="1.3" fill="#111"/><path d="M1055 392.3 H1072" stroke="#666" stroke-width="0.7"/><path d="M1038 392.3 H1055" stroke="#30d830" stroke-width="0.8" stroke-dasharray="5 1.5"/><circle cx="1078.5" cy="392.3" r="6.3" fill="#fff" stroke="#aaa" stroke-width="0.8"/><text x="1078.5" y="395.3" font-size="8" fill="#ccc" text-anchor="middle">D</text><circle cx="1086.5" cy="392.3" r="6.6" fill="none" stroke="#30d830" stroke-width="0.7" stroke-dasharray="3 2.5"/><text x="1086.3" y="395.5" font-size="9" fill="#222" text-anchor="middle">D</text><circle cx="1055" cy="392.3" r="1.3" fill="#111"/><circle cx="1068.5" cy="392.3" r="1.3" fill="#111"/><path d="M261 424.2 H281" stroke="#666" stroke-width="0.7"/><path d="M281 424.2 H296" stroke="#30d830" stroke-width="0.8" stroke-dasharray="5 1.5"/><circle cx="254.5" cy="424.2" r="6.3" fill="#fff" stroke="#aaa" stroke-width="0.8"/><text x="254.5" y="427.2" font-size="8" fill="#ccc" text-anchor="middle">C</text><circle cx="247" cy="424.2" r="6.6" fill="none" stroke="#30d830" stroke-width="0.7" stroke-dasharray="3 2.5"/><text x="246.5" y="427.4" font-size="9" fill="#222" text-anchor="middle">C</text><circle cx="267.3" cy="424.2" r="1.3" fill="#111"/><circle cx="280.6" cy="424.2" r="1.3" fill="#111"/><path d="M1055 424.2 H1072" stroke="#666" stroke-width="0.7"/><path d="M1038 424.2 H1055" stroke="#30d830" stroke-width="0.8" stroke-dasharray="5 1.5"/><circle cx="1078.5" cy="424.2" r="6.3" fill="#fff" stroke="#aaa" stroke-width="0.8"/><text x="1078.5" y="427.2" font-size="8" fill="#ccc" text-anchor="middle">C</text><circle cx="1086.5" cy="424.2" r="6.6" fill="none" stroke="#30d830" stroke-width="0.7" stroke-dasharray="3 2.5"/><text x="1086.3" y="427.4" font-size="9" fill="#222" text-anchor="middle">C</text><circle cx="1055" cy="424.2" r="1.3" fill="#111"/><circle cx="1068.5" cy="424.2" r="1.3" fill="#111"/><path d="M261 502.8 H281" stroke="#666" stroke-width="0.7"/><path d="M281 502.8 H296" stroke="#30d830" stroke-width="0.8" stroke-dasharray="5 1.5"/><circle cx="254.5" cy="502.8" r="6.3" fill="#fff" stroke="#aaa" stroke-width="0.8"/><text x="254.5" y="505.8" font-size="8" fill="#ccc" text-anchor="middle">B</text><circle cx="247" cy="502.8" r="6.6" fill="none" stroke="#30d830" stroke-width="0.7" stroke-dasharray="3 2.5"/><text x="246.5" y="506.0" font-size="9" fill="#222" text-anchor="middle">B</text><circle cx="267.3" cy="502.8" r="1.3" fill="#111"/><circle cx="280.6" cy="502.8" r="1.3" fill="#111"/><path d="M1055 502.8 H1072" stroke="#666" stroke-width="0.7"/><path d="M1038 502.8 H1055" stroke="#30d830" stroke-width="0.8" stroke-dasharray="5 1.5"/><circle cx="1078.5" cy="502.8" r="6.3" fill="#fff" stroke="#aaa" stroke-width="0.8"/><text x="1078.5" y="505.8" font-size="8" fill="#ccc" text-anchor="middle">B</text><circle cx="1086.5" cy="502.8" r="6.6" fill="none" stroke="#30d830" stroke-width="0.7" stroke-dasharray="3 2.5"/><text x="1086.3" y="506.0" font-size="9" fill="#222" text-anchor="middle">B</text><circle cx="1055" cy="502.8" r="1.3" fill="#111"/><circle cx="1068.5" cy="502.8" r="1.3" fill="#111"/><path d="M261 522.4 H281" stroke="#666" stroke-width="0.7"/><path d="M281 522.4 H296" stroke="#30d830" stroke-width="0.8" stroke-dasharray="5 1.5"/><circle cx="254.5" cy="522.4" r="6.3" fill="#fff" stroke="#aaa" stroke-width="0.8"/><text x="254.5" y="525.4" font-size="8" fill="#ccc" text-anchor="middle">A</text><circle cx="247" cy="522.4" r="6.6" fill="none" stroke="#30d830" stroke-width="0.7" stroke-dasharray="3 2.5"/><text x="246.5" y="525.6" font-size="9" fill="#222" text-anchor="middle">A</text><circle cx="267.3" cy="522.4" r="1.3" fill="#111"/><circle cx="280.6" cy="522.4" r="1.3" fill="#111"/><path d="M1055 522.4 H1072" stroke="#666" stroke-width="0.7"/><path d="M1038 522.4 H1055" stroke="#30d830" stroke-width="0.8" stroke-dasharray="5 1.5"/><circle cx="1078.5" cy="522.4" r="6.3" fill="#fff" stroke="#aaa" stroke-width="0.8"/><text x="1078.5" y="525.4" font-size="8" fill="#ccc" text-anchor="middle">A</text><circle cx="1086.5" cy="522.4" r="6.6" fill="none" stroke="#30d830" stroke-width="0.7" stroke-dasharray="3 2.5"/><text x="1086.3" y="525.6" font-size="9" fill="#222" text-anchor="middle">A</text><circle cx="1055" cy="522.4" r="1.3" fill="#111"/><circle cx="1068.5" cy="522.4" r="1.3" fill="#111"/><g stroke="#444" stroke-width="0.7" fill="none"><path d="M267.3 298.2 V522.4 M280.6 298.2 V522.4 M1055 298.2 V522.4 M1068.5 298.2 V522.4"/></g><text transform="translate(277.2,323) rotate(-90)" font-size="5.4" fill="#111" text-anchor="middle" font-weight="bold">2900</text><text transform="translate(1052,323) rotate(-90)" font-size="5.4" fill="#111" text-anchor="middle" font-weight="bold">2900</text><text transform="translate(277.2,370) rotate(-90)" font-size="5.4" fill="#111" text-anchor="middle" font-weight="bold">2600</text><text transform="translate(1052,370) rotate(-90)" font-size="5.4" fill="#111" text-anchor="middle" font-weight="bold">2600</text><text transform="translate(277.2,408) rotate(-90)" font-size="5.4" fill="#111" text-anchor="middle" font-weight="bold">1600</text><text transform="translate(1052,408) rotate(-90)" font-size="5.4" fill="#111" text-anchor="middle" font-weight="bold">1600</text><text transform="translate(277.2,463.5) rotate(-90)" font-size="5.4" fill="#111" text-anchor="middle" font-weight="bold">4000</text><text transform="translate(1052,463.5) rotate(-90)" font-size="5.4" fill="#111" text-anchor="middle" font-weight="bold">4000</text><text transform="translate(277.2,512.6) rotate(-90)" font-size="5.4" fill="#111" text-anchor="middle" font-weight="bold">1100</text><text transform="translate(1052,512.6) rotate(-90)" font-size="5.4" fill="#111" text-anchor="middle" font-weight="bold">1100</text><text transform="translate(265.3,410) rotate(-90)" font-size="5.4" fill="#111" text-anchor="middle" font-weight="bold">13100</text><text transform="translate(1065.6,410) rotate(-90)" font-size="5.4" fill="#111" text-anchor="middle" font-weight="bold">13100</text><path d="M311.4 352 V395" stroke="#888" stroke-width="0.7"/><circle cx="311.4" cy="344.8" r="7" fill="#fff" stroke="#aaa" stroke-width="0.8"/><text x="311.4" y="348" font-size="8" fill="#ccc" text-anchor="middle">1</text><path d="M668 237 H684 M677.5 229 V245" stroke="#20c020" stroke-width="0.9"/><path d="M240 522.4 H254 M247 515 V530" stroke="#20c020" stroke-width="0.9"/><path d="M311.5 523 V487" stroke="#20b020" stroke-width="2.6"/><path d="M313 522.6 H340" stroke="#c04040" stroke-width="2.4"/><polygon points="339,519 350,522.6 339,526.2" fill="#c04040"/><polygon points="308,520.5 315,520.5 317,527 306,527" fill="#2030e0"/><path d="M356.5 518.5 L364.5 526.5 M364.5 518.5 L356.5 526.5" stroke="#f04040" stroke-width="1"/><g stroke="#f5873a" stroke-width="4.3" fill="none" stroke-linecap="butt"><path d="M297.8 491.4 L432 248.4 M324.5 515.3 L646.5 445.8 M1028.5 491.4 L899.6 248.4 M1001.5 515.3 L685.4 445.8"/><rect x="295.2" y="491.4" width="29.8" height="26.3" rx="4" ry="4"/><rect x="1001" y="491.4" width="29.2" height="26.3" rx="4" ry="4"/></g><rect x="432.7" y="248.6" width="213.7" height="199.8" fill="#fff"/><g><path d="M475.4 250 H494.8 V400.9 H646 V421 H475.4 Z" fill="#b7a061"/><path d="M468.1 250 V428.2 H646" stroke="#e8d496" stroke-width="14.6" fill="none"/><path d="M467.4 250 V428.9 H646" stroke="#6f6549" stroke-width="4.2" fill="none"/><path d="M469.6 250 V426.7 H646" stroke="#4a4232" stroke-width="0.8" fill="none"/><path d="M475.6 250 V420.7 H646" stroke="#4a4232" stroke-width="0.8" fill="none"/><path d="M460.8 250 V435.5 H646" stroke="#6a6a72" stroke-width="0.8" fill="none"/><rect x="460" y="274.9" width="34.8" height="7.3" fill="#fff"/><rect x="475.2" y="273" width="19.6" height="5.5" fill="#fff"/><rect x="611.7" y="401" width="9.1" height="36" fill="#fff"/><rect x="613.5" y="421" width="5.5" height="15" fill="#fff"/><rect x="494.8" y="250" width="48.6" height="28.5" fill="#b2b2b2" stroke="#555" stroke-width="0.6"/><rect x="616.4" y="352.7" width="29.6" height="48.2" fill="#b2b2b2" stroke="#555" stroke-width="0.6"/><path d="M494.8 278.5 H543.4 V352.7 H616.4 V400.9 H494.8 Z" fill="#bfd0ea" stroke="#333" stroke-width="0.7"/><rect x="494.8" y="376.4" width="24.8" height="24.5" fill="#c6c0e4"/><path d="M519.6 352.7 V400.9 M494.8 376.4 H543.4 V352.7 H519.6" stroke="#555" stroke-width="0.6" fill="none"/><path d="M519.2 250 V278.5 M616.4 376.4 H646" stroke="#c080b0" stroke-width="0.6"/><path d="M434.8 376.4 H494 M519.6 402 V446" stroke="#f03a3a" stroke-width="0.7" stroke-dasharray="7 2 1.5 2"/></g><svg x="600" y="270" width="44.6" height="60" viewBox="600 270 44.6 60" style="overflow:hidden"><text transform="translate(603.6,316) scale(0.6,1)" font-size="55" font-family="Liberation Serif,serif" fill="#111">GE</text></svg><rect x="646.4" y="270" width="30" height="60" fill="#fff" opacity="0"/><rect x="685.6" y="248.6" width="214.4" height="199.8" fill="#fff"/><g><path d="M852.5 250 H872.6 V422.8 H687 V402 H852.5 Z" fill="#b7a061"/><path d="M880.2 250 V430.3 H687" stroke="#e8d496" stroke-width="15" fill="none"/><path d="M880.6 250 V431.1 H687" stroke="#6f6549" stroke-width="4.2" fill="none"/><path d="M878.4 250 V428.9 H687" stroke="#4a4232" stroke-width="0.8" fill="none"/><path d="M872.6 250 V422.8 H687" stroke="#4a4232" stroke-width="0.8" fill="none"/><path d="M887.8 250 V437.8 H687" stroke="#6a6a72" stroke-width="0.8" fill="none"/><path d="M853 401.2 H870 V421.5 H887" stroke="#fff" stroke-width="1.2" fill="none"/><rect x="803.5" y="250" width="49" height="26" fill="#b2b2b2" stroke="#555" stroke-width="0.6"/><rect x="687" y="352.7" width="41.7" height="49.3" fill="#b2b2b2" stroke="#555" stroke-width="0.6"/><path d="M803.5 276 H852.5 V402 H728.7 V352.7 H803.5 Z" fill="#bfd0ea" stroke="#333" stroke-width="0.7"/><rect x="827.6" y="377" width="24.9" height="25" fill="#c6c0e4"/><path d="M827.6 352.7 V402 M852.5 377 H803.5 V352.7 H827.6" stroke="#555" stroke-width="0.6" fill="none"/><path d="M827.8 250 V276 M687 377 H728.7" stroke="#c080b0" stroke-width="0.6"/><path d="M827.6 403 V446 M853 377 H898" stroke="#f03a3a" stroke-width="0.7" stroke-dasharray="7 2 1.5 2"/></g><g stroke="#f5873a" stroke-width="2.9" fill="none"><rect x="433.55" y="249.45" width="211.9" height="197.7"/><rect x="686.45" y="249.45" width="212.2" height="197.7"/></g></svg>
<div class="a" style="left:298.3px;top:154.8px;width:342.0px;height:29.4px;background:#f0f0f0;"></div>
<div class="a" style="left:433.9px;top:158.0px;width:1.0px;height:23.0px;background:#c8c8c8;"></div>
<div class="a" style="left:509.8px;top:158.0px;width:1.0px;height:23.0px;background:#c8c8c8;"></div>
<div class="a" style="left:607.1px;top:158.0px;width:1.0px;height:23.0px;background:#c8c8c8;"></div>
<div class="a" style="left:539.6px;top:150px;width:64.6px;height:39.2px;border:4px solid #f5873a;border-radius:8px"></div>
<div class="a" style="left:668.4px;top:140.3px;width:276.2px;height:58.4px;background:#7f7f7f;"></div>
<div class="a" style="left:679.8px;top:153.4px;width:11px;height:11px;border-radius:50%;background:#fff"></div>
<div class="a" style="left:679.8px;top:173.6px;width:11px;height:11px;border-radius:50%;background:#fff"></div>
<div class="t" style="left:712.3px;top:147.9px;font-size:17.7px;line-height:22px;height:22px;color:#fff">阳角补充PCF墙</div>
<div class="t" style="left:712.3px;top:168.1px;font-size:17.7px;line-height:22px;height:22px;color:#fff">外叶墙转角自由调整</div>
<div class="a" style="left:1061.0px;top:169.0px;width:22.7px;height:22.6px;background:#d2d2d2;border:1px solid #bdbdbd"></div>
<div class="t c" style="left:1072.3px;top:171.5px;font-size:16px;line-height:18px;height:18px;color:#a8a8a8;font-family:'Liberation Serif','Noto Serif CJK SC',serif">上</div>
<div class="a" style="left:594.5px;top:665px;width:367px;height:17.4px;background:#fff;border:1px solid #8c8c8c;box-shadow:0 0 2px #999"></div>
<div class="a" style="left:945px;top:666px;width:15.5px;height:15.4px;background:#f4f4f4;border:1px solid #aaa"></div>
<svg style="left:948.5px;top:670px" width="8" height="7" viewBox="0 0 8 7"><path d="M0.5 6.5 L4 0.8 L7.5 6.5 Z" fill="#777"/></svg>
<svg style="left:932px;top:668px" width="11" height="11" viewBox="0 0 11 11"><circle cx="6.6" cy="4.2" r="3.2" fill="none" stroke="#7a9ac8" stroke-width="1"/><path d="M4.3 6.6 L1 10" stroke="#7a9ac8" stroke-width="1.3"/></svg>
<div class="a" style="left:1.0px;top:116.0px;width:220.0px;height:590.0px;background:#e6e6e6;"></div>
<div class="a" style="left:221.0px;top:116.0px;width:3.0px;height:590.0px;background:#dadada;"></div>
<div class="t" style="left:3.0px;top:125.5px;font-size:11.3px;color:#5a5a5a;line-height:14px;height:14px;margin-top:-2px">阳角PCF补充</div>
<svg style="left:195px;top:126px" width="24" height="9" viewBox="0 0 24 9"><path d="M1.5 2.5 L6.5 2.5 L4 5.5 Z" fill="#666"/><path d="M14 1.5 L19 6.5 M19 1.5 L14 6.5" stroke="#666" stroke-width="1" fill="none"/></svg>
<div class="a" style="left:2.0px;top:144.0px;width:204.0px;height:528.5px;background:#f3f3f3;border-left:1px solid #c8c8c8;border-right:1px solid #c8c8c8;border-bottom:1px solid #bbb"></div>
<div class="a" style="left:2.0px;top:672.5px;width:204.0px;height:16.0px;background:#f0f0f0;"></div>
<div class="a" style="left:206.0px;top:143.5px;width:14.5px;height:545.0px;background:#f0f0f0;"></div>
<div class="a" style="left:208.0px;top:155.5px;width:10.5px;height:442.5px;background:linear-gradient(90deg,#f4f4f4,#e0e0e0 45%,#c4c4c8);border:1px solid #c0c0c0;border-radius:2px"></div>
<svg style="left:210.5px;top:146.5px" width="6" height="5" viewBox="0 0 6 5"><path d="M0.3 4.2 L3 1.2 L5.7 4.2 Z" fill="#444"/></svg>
<svg style="left:210.5px;top:680px" width="6" height="5" viewBox="0 0 6 5"><path d="M0.3 0.8 L3 3.8 L5.7 0.8 Z" fill="#444"/></svg>
<div class="a" style="left:2.0px;top:144.0px;width:204.0px;height:13.0px;background:#a8a8a8;"></div>
<div class="t" style="left:3.0px;top:147.0px;font-size:8.3px;color:#000;font-family:'Liberation Serif','Noto Serif CJK SC',serif;font-weight:bold">接缝尺寸</div>
<svg style="left:196.5px;top:147.0px" width="6" height="7" viewBox="0 0 6 7"><path d="M0.5 0.5 L3 3 L5.5 0.5 M0.5 3.5 L3 6 L5.5 3.5" stroke="#000" stroke-width="1.2" fill="none"/></svg>
<div class="a" style="left:8.0px;top:165.7px;width:8px;height:8px;background:#fff;border:1px solid #8e8f8f"></div>
<svg style="left:9.0px;top:166.7px" width="6" height="6" viewBox="0 0 6 6"><path d="M0.8 3 L2.4 4.8 L5.2 0.8" fill="none" stroke="#2a4fc0" stroke-width="1.2"/></svg>
<div class="t" style="left:19.0px;top:166.2px;font-size:8.3px;color:#000;font-family:'Liberation Serif','Noto Serif CJK SC',serif;">厚度同PCF墙布置参数</div>
<div class="t" style="left:8.0px;top:181.4px;font-size:8.3px;color:#000;font-family:'Liberation Serif','Noto Serif CJK SC',serif;">外叶板厚度</div>
<div class="a" style="left:81.5px;top:177.5px;width:118.5px;height:13.7px;background:#f0f0f0;border:1px solid #c4c4c4;border-radius:1px;font-size:7.6px;line-height:10.9px;color:#888;padding-left:1.5px;white-space:nowrap;overflow:hidden">60</div>
<div class="t" style="left:8.0px;top:197.9px;font-size:8.3px;color:#000;font-family:'Liberation Serif','Noto Serif CJK SC',serif;">保温层厚度</div>
<div class="a" style="left:81.5px;top:195.8px;width:118.5px;height:13.2px;background:#f0f0f0;border:1px solid #c4c4c4;border-radius:1px;font-size:7.6px;line-height:10.4px;color:#888;padding-left:1.5px;white-space:nowrap;overflow:hidden">80</div>
<div class="a" style="left:37.5px;top:217.5px;width:133.1px;height:92.5px;background:#f7f7f7;"></div>
<div class="a" style="left:67.4px;top:218.0px;width:6.6px;height:7.0px;background:#93c9c9;"></div>
<div class="a" style="left:81.5px;top:218.0px;width:11.9px;height:17.0px;background:#93c9c9;"></div>
<div class="a" style="left:81.5px;top:235.0px;width:11.9px;height:41.5px;background:#ffd37a;"></div>
<div class="a" style="left:81.5px;top:264.2px;width:41.0px;height:12.3px;background:#ffd37a;"></div>
<div class="a" style="left:122.5px;top:264.2px;width:25.0px;height:12.3px;background:#93c9c9;"></div>
<div class="a" style="left:67.4px;top:245.0px;width:6.6px;height:45.0px;background:#93c9c9;"></div>
<div class="a" style="left:74.0px;top:252.0px;width:7.5px;height:31.5px;background:#a3a3fb;"></div>
<div class="a" style="left:74.0px;top:276.5px;width:32.0px;height:7.0px;background:#a3a3fb;"></div>
<div class="a" style="left:139.7px;top:276.5px;width:7.8px;height:7.0px;background:#a3a3fb;"></div>
<div class="a" style="left:67.4px;top:283.5px;width:45.6px;height:6.5px;background:#93c9c9;"></div>
<div class="a" style="left:132.0px;top:283.5px;width:15.5px;height:6.5px;background:#93c9c9;"></div>
<svg style="left:0;top:0" width="230" height="712" viewBox="0 0 230 712"><g stroke="#1fd01f" stroke-width="1" fill="none"><path d="M60.4 224 V246.5 M57 225 H67 M57 235 H64 M57 245.6 H67"/><path d="M111 298.3 H135 M112 294.5 V302 M123 294.5 V302 M134 294.5 V302"/></g></svg>
<div class="t" style="left:45.0px;top:224.8px;font-size:7.2px;color:#f03030;">c1</div>
<div class="t" style="left:45.0px;top:234.6px;font-size:7.2px;color:#f03030;">c2</div>
<div class="t" style="left:113.0px;top:301.4px;font-size:7.2px;color:#f03030;">c2 c1</div>
<div class="a" style="left:39.0px;top:259.7px;width:26.0px;height:13.3px;background:#fff;border:1px solid #d0d0d0;border-radius:1px;font-size:7.6px;line-height:10.5px;color:#111;padding-left:1.5px;white-space:nowrap;overflow:hidden">-10</div>
<div class="a" style="left:143.6px;top:295.0px;width:24.9px;height:13.0px;background:#fff;border:1px solid #d0d0d0;border-radius:1px;font-size:7.6px;line-height:10.2px;color:#111;padding-left:1.5px;white-space:nowrap;overflow:hidden">-10</div>
<div class="t" style="left:8.0px;top:324.7px;font-size:8.3px;color:#000;font-family:'Liberation Serif','Noto Serif CJK SC',serif;">PCF端保温外伸</div>
<div class="a" style="left:81.5px;top:322.0px;width:118.5px;height:13.5px;background:#fff;border:1px solid #d0d0d0;border-radius:1px;font-size:7.6px;line-height:10.7px;color:#111;padding-left:1.5px;white-space:nowrap;overflow:hidden">-10</div>
<div class="t" style="left:8.0px;top:343.2px;font-size:8.3px;color:#000;font-family:'Liberation Serif','Noto Serif CJK SC',serif;">墙端保温延伸</div>
<div class="a" style="left:81.5px;top:341.5px;width:118.5px;height:13.0px;background:#fff;border:1px solid #d0d0d0;border-radius:1px;font-size:7.6px;line-height:10.2px;color:#111;padding-left:1.5px;white-space:nowrap;overflow:hidden">-10</div>
<div class="a" style="left:2.0px;top:359.0px;width:204.0px;height:3.4px;background:#e6e6e6;border-top:1px solid #bbb"></div>
<div class="a" style="left:2.0px;top:362.4px;width:204.0px;height:12.6px;background:#a8a8a8;"></div>
<div class="t" style="left:3.0px;top:364.0px;font-size:9.3px;color:#000;">PCF墙高</div>
<svg style="left:196.5px;top:365.2px" width="6" height="7" viewBox="0 0 6 7"><path d="M0.5 0.5 L3 3 L5.5 0.5 M0.5 3.5 L3 6 L5.5 3.5" stroke="#000" stroke-width="1.2" fill="none"/></svg>
<div class="a" style="left:8.0px;top:383.4px;width:8px;height:8px;background:#fff;border:1px solid #8e8f8f"></div>
<svg style="left:9.0px;top:384.4px" width="6" height="6" viewBox="0 0 6 6"><path d="M0.8 3 L2.4 4.8 L5.2 0.8" fill="none" stroke="#2a4fc0" stroke-width="1.2"/></svg>
<div class="t" style="left:19.0px;top:383.8px;font-size:8.3px;color:#000;font-family:'Liberation Serif','Noto Serif CJK SC',serif;">高度同PCF墙布置参数</div>
<div class="t" style="left:8.0px;top:399.2px;font-size:8.3px;color:#000;font-family:'Liberation Serif','Noto Serif CJK SC',serif;">PCF墙高度</div>
<div class="a" style="left:62.6px;top:398.7px;width:126.1px;height:14px;background:#f4f4f4;border:1px solid #c4c4c4;border-radius:2px;font-size:8.3px;line-height:12px;color:#8a8a8a;padding-left:2px">关联层高</div>
<svg style="left:180px;top:404.5px" width="5" height="4" viewBox="0 0 5 4"><path d="M0 0.5 L5 0.5 L2.5 3.5 Z" fill="#999"/></svg>
<div class="a" style="left:23.0px;top:434.0px;width:154.0px;height:82.0px;background:#f7f7f7;"></div>
<div class="a" style="left:43.0px;top:415.0px;width:22.6px;height:15.4px;background:#f0f0f0;border:1px solid #c4c4c4;border-radius:1px;font-size:7.6px;line-height:12.6px;color:#888;padding-left:1.5px;white-space:nowrap;overflow:hidden">0</div>
<div class="a" style="left:128.0px;top:423.3px;width:22.6px;height:16.0px;background:#f0f0f0;border:1px solid #c4c4c4;border-radius:1px;font-size:7.6px;line-height:13.2px;color:#888;padding-left:1.5px;white-space:nowrap;overflow:hidden">10</div>
<div class="a" style="left:84.0px;top:449.6px;width:12.3px;height:52.4px;background:#93c9c9;"></div>
<div class="a" style="left:96.3px;top:459.4px;width:12.5px;height:33.2px;background:#a3a3fb;"></div>
<div class="a" style="left:128.0px;top:465.0px;width:22.6px;height:16.0px;background:#f0f0f0;border:1px solid #c4c4c4;border-radius:1px;font-size:7.6px;line-height:13.2px;color:#888;padding-left:1.5px;white-space:nowrap;overflow:hidden">10</div>
<div class="a" style="left:43.0px;top:475.4px;width:22.6px;height:16.0px;background:#f0f0f0;border:1px solid #c4c4c4;border-radius:1px;font-size:7.6px;line-height:13.2px;color:#888;padding-left:1.5px;white-space:nowrap;overflow:hidden">0</div>
<svg style="left:0;top:0" width="230" height="712" viewBox="0 0 230 712"><path d="M24 439 H175 M24 513 H175" stroke="#aaa" stroke-width="1" stroke-dasharray="1 1.2" fill="none"/><g stroke="#1fd01f" stroke-width="1" fill="none"><path d="M78.6 439 V450.5 M76.8 441.5 L78.6 439.3 L80.4 441.5 M76.8 448 L78.6 450.2 L80.4 448 M76 450 H83"/><path d="M78.6 500 V514 M76.8 502.5 L78.6 500.3 L80.4 502.5 M76.8 511.5 L78.6 513.7 L80.4 511.5 M76 501 H83"/><path d="M113.3 448 V461 M103 449.6 H116 M108 459.4 H116 M111.5 451.8 L113.3 449.8 L115.1 451.8 M111.5 457.2 L113.3 459.2 L115.1 457.2"/><path d="M113.3 490 V503.5 M108 492.6 H116 M103 502 H116 M111.5 494.8 L113.3 492.8 L115.1 494.8 M111.5 499.8 L113.3 501.8 L115.1 499.8"/></g><g stroke="#999" stroke-width="0.8" fill="none"><path d="M24 445.5 H41 M32.5 445 L36.5 440 L40.5 445"/><path d="M24 506.8 H41 M32.5 507.3 L36.5 512.3 L40.5 507.3"/></g></svg>
<div class="t" style="left:66.0px;top:439.0px;font-size:7.2px;color:#f03030;">h1</div>
<div class="t" style="left:66.0px;top:501.6px;font-size:7.2px;color:#f03030;">h2</div>
<div class="t" style="left:117.0px;top:449.5px;font-size:7.2px;color:#f03030;">h3</div>
<div class="t" style="left:117.0px;top:492.0px;font-size:7.2px;color:#f03030;">h4</div>
<div class="t" style="left:25.6px;top:448.8px;font-size:7.6px;color:#888;">层顶</div>
<div class="t" style="left:25.6px;top:495.0px;font-size:7.6px;color:#888;">层底</div>
<div class="a" style="left:2.0px;top:521.5px;width:204.0px;height:4.5px;background:#e6e6e6;border-top:1px solid #bbb"></div>
<div class="a" style="left:2.0px;top:526.0px;width:204.0px;height:12.0px;background:#a8a8a8;"></div>
<div class="t" style="left:3.0px;top:528.5px;font-size:8.3px;color:#000;font-family:'Liberation Serif','Noto Serif CJK SC',serif;font-weight:bold">外叶构造</div>
<svg style="left:196.5px;top:528.5px" width="6" height="7" viewBox="0 0 6 7"><path d="M0.5 0.5 L3 3 L5.5 0.5 M0.5 3.5 L3 6 L5.5 3.5" stroke="#000" stroke-width="1.2" fill="none"/></svg>
<div class="a" style="left:8.0px;top:546.5px;width:8px;height:8px;background:#fff;border:1px solid #8e8f8f"></div>
<svg style="left:9.0px;top:547.5px" width="6" height="6" viewBox="0 0 6 6"><path d="M0.8 3 L2.4 4.8 L5.2 0.8" fill="none" stroke="#2a4fc0" stroke-width="1.2"/></svg>
<div class="t" style="left:19.0px;top:545.7px;font-size:8px;color:#000;">企口同PCF墙布置参数</div>
<div class="a" style="left:27.0px;top:563.0px;width:154.0px;height:84.0px;background:#f7f7f7;"></div>
<div class="a" style="left:43.4px;top:560.4px;width:21.6px;height:14.9px;background:#f0f0f0;border:1px solid #c4c4c4;border-radius:1px;font-size:7.6px;line-height:12.1px;color:#888;padding-left:1.5px;white-space:nowrap;overflow:hidden">20</div>
<div class="a" style="left:68.0px;top:560.4px;width:22.0px;height:14.9px;background:#f0f0f0;border:1px solid #c4c4c4;border-radius:1px;font-size:7.6px;line-height:12.1px;color:#888;padding-left:1.5px;white-space:nowrap;overflow:hidden">25</div>
<div class="a" style="left:8.0px;top:585.0px;width:21.7px;height:15.0px;background:#f0f0f0;border:1px solid #c4c4c4;border-radius:1px;font-size:7.6px;line-height:12.2px;color:#888;padding-left:1.5px;white-space:nowrap;overflow:hidden">35</div>
<div class="a" style="left:178.0px;top:608.0px;width:22.0px;height:15.3px;background:#f0f0f0;border:1px solid #c4c4c4;border-radius:1px;font-size:7.6px;line-height:12.5px;color:#888;padding-left:1.5px;white-space:nowrap;overflow:hidden">35</div>
<div class="a" style="left:126.0px;top:635.4px;width:22.0px;height:14.8px;background:#f0f0f0;border:1px solid #c4c4c4;border-radius:1px;font-size:7.6px;line-height:12.0px;color:#888;padding-left:1.5px;white-space:nowrap;overflow:hidden">25</div>
<div class="a" style="left:151.0px;top:635.4px;width:22.0px;height:14.8px;background:#f0f0f0;border:1px solid #c4c4c4;border-radius:1px;font-size:7.6px;line-height:12.0px;color:#888;padding-left:1.5px;white-space:nowrap;overflow:hidden">20</div>
<svg style="left:0;top:0" width="230" height="712" viewBox="0 0 230 712"><polygon points="52.6,606.5 63.6,606.5 73.3,591.4 83.6,591.4 83.6,631 52.6,631" fill="#93c9c9"/><polygon points="128,574.5 158.5,574.5 158.5,598.6 147,598.6 137.5,613.5 128,613.5" fill="#93c9c9"/><path d="M48.5 631 H67 L68 632.5 L69 631 H87 M124.5 574.5 H142.5 L143.5 576 L144.5 574.5 H163" stroke="#999" stroke-width="0.8" fill="none"/><g stroke="#1fd01f" stroke-width="1" fill="none"><path d="M50.5 587.4 H65.5 M52.6 585 V590 M63.6 585 V590 M71 587.4 H86 M73.3 585 V590 M83.6 585 V590"/><path d="M46 589.5 V608.5 M43.5 591.4 H52 M43.5 606.5 H52"/><path d="M163.6 596.5 V615.5 M158 598.6 H166 M158 613.5 H166"/><path d="M125.5 618.4 H140 M128 616 V621 M137.5 616 V621 M146 618.4 H161 M148 616 V621 M158.5 616 V621"/></g></svg>
<div class="t" style="left:54.0px;top:577.0px;font-size:8.6px;color:#f01818;font-family:'Liberation Serif','Noto Serif CJK SC',serif;">a1</div>
<div class="t" style="left:75.0px;top:577.0px;font-size:8.6px;color:#f01818;font-family:'Liberation Serif','Noto Serif CJK SC',serif;">b1</div>
<div class="t" style="left:35.0px;top:593.0px;font-size:8.6px;color:#f01818;font-family:'Liberation Serif','Noto Serif CJK SC',serif;">c1</div>
<div class="t" style="left:165.5px;top:603.4px;font-size:8.6px;color:#f01818;font-family:'Liberation Serif','Noto Serif CJK SC',serif;">c2</div>
<div class="t" style="left:126.7px;top:622.3px;font-size:8.6px;color:#f01818;font-family:'Liberation Serif','Noto Serif CJK SC',serif;">a2</div>
<div class="t" style="left:148.5px;top:622.3px;font-size:8.6px;color:#f01818;font-family:'Liberation Serif','Noto Serif CJK SC',serif;">b2</div>
<div class="a" style="left:55.5px;top:656.7px;width:8px;height:8px;background:#fff;border:1px solid #c4c4c4"></div>
<svg style="left:56.5px;top:657.7px" width="6" height="6" viewBox="0 0 6 6"><path d="M0.8 3 L2.4 4.8 L5.2 0.8" fill="none" stroke="#b8bcc0" stroke-width="1.2"/></svg>
<div class="t" style="left:67.0px;top:656.0px;font-size:8.3px;color:#666;">上企口</div>
<div class="a" style="left:122.0px;top:656.7px;width:8px;height:8px;background:#fff;border:1px solid #c4c4c4"></div>
<svg style="left:123.0px;top:657.7px" width="6" height="6" viewBox="0 0 6 6"><path d="M0.8 3 L2.4 4.8 L5.2 0.8" fill="none" stroke="#b8bcc0" stroke-width="1.2"/></svg>
<div class="t" style="left:133.0px;top:656.0px;font-size:8.3px;color:#666;">下企口</div>
<div class="a" style="left:1.0px;top:688.5px;width:220.0px;height:17.5px;background:#e6e6e6;"></div>
<div class="a" style="left:52.0px;top:688.5px;width:54.0px;height:15.0px;background:#fbfbfb;border:1px solid #d4d4d4;border-top:none"></div>
<div class="t" style="left:5.0px;top:691.0px;font-size:8.3px;color:#555;">视图浏览器</div>
<div class="t" style="left:55.0px;top:691.0px;font-size:8.3px;color:#3a3a3a;">阳角PCF补充</div>
<div class="a" style="left:1111.0px;top:116.0px;width:218.0px;height:590.0px;background:#e8e8e8;"></div>
<div class="t" style="left:1114.0px;top:127.0px;font-size:11.1px;color:#5a5a5a;line-height:14px;height:14px;margin-top:-2px">节点处外叶和保温调整</div>
<svg style="left:1304px;top:128px" width="24" height="9" viewBox="0 0 24 9"><path d="M2 2.5 L7 2.5 L4.5 5.5 Z" fill="#666"/><path d="M15 1.5 L20 6.5 M20 1.5 L15 6.5" stroke="#666" stroke-width="1" fill="none"/></svg>
<div class="a" style="left:1112.0px;top:146.2px;width:204.8px;height:386.8px;background:#f0f0f0;border-left:1px solid #b8b8b8;border-right:1px solid #b8b8b8;border-bottom:1px solid #b0b0b0"></div>
<div class="a" style="left:1112.0px;top:533.0px;width:204.8px;height:156.5px;background:#efefef;"></div>
<div class="a" style="left:1317.0px;top:146.0px;width:12.0px;height:543.5px;background:#f0f0f0;"></div>
<div class="a" style="left:1318.5px;top:158.6px;width:9.8px;height:488.4px;background:linear-gradient(90deg,#f4f4f4,#e0e0e0 45%,#c0c0c4);border:1px solid #c0c0c0;border-radius:2px"></div>
<svg style="left:1320.6px;top:149.5px" width="6" height="5" viewBox="0 0 6 5"><path d="M0.3 4.2 L3 1.2 L5.7 4.2 Z" fill="#444"/></svg>
<svg style="left:1320.6px;top:682.5px" width="6" height="5" viewBox="0 0 6 5"><path d="M0.3 0.8 L3 3.8 L5.7 0.8 Z" fill="#444"/></svg>
<div class="a" style="left:1112.0px;top:146.2px;width:204.8px;height:13.4px;background:#a8a8a8;"></div>
<div class="t" style="left:1113.0px;top:149.4px;font-size:8.3px;color:#000;font-family:'Liberation Serif','Noto Serif CJK SC',serif;font-weight:bold">阳角节点</div>
<svg style="left:1306.5px;top:149.4px" width="6" height="7" viewBox="0 0 6 7"><path d="M0.5 0.5 L3 3 L5.5 0.5 M0.5 3.5 L3 6 L5.5 3.5" stroke="#000" stroke-width="1.2" fill="none"/></svg>
<div class="t" style="left:1128.0px;top:177.5px;font-size:8.3px;color:#000;font-family:'Liberation Serif','Noto Serif CJK SC',serif;">处理方式</div>
<div class="a" style="left:1195.3px;top:174.8px;width:103.5px;height:12.9px;background:linear-gradient(#f6f6f6,#dedede);border:1px solid #707070;border-radius:2px;font-size:8.3px;line-height:13.3px;color:#000;padding-left:2px;font-family:'Liberation Serif','Noto Serif CJK SC',serif;">竖直避让水平</div>
<svg style="left:1290.5px;top:180.2px" width="6" height="4" viewBox="0 0 6 4"><path d="M0 0.3 L6 0.3 L3 3.6 Z" fill="#111"/></svg>
<div class="a" style="left:1135.0px;top:198.0px;width:156.3px;height:124.5px;background:#f6f6f6;"></div>
<div class="a" style="left:1194.0px;top:208.0px;width:6.8px;height:63.0px;background:#93c9c9;"></div>
<div class="a" style="left:1200.8px;top:208.0px;width:7.2px;height:56.3px;background:#a3a3fb;"></div>
<div class="a" style="left:1208.0px;top:208.0px;width:12.5px;height:17.9px;background:#93c9c9;"></div>
<div class="a" style="left:1208.0px;top:225.9px;width:12.5px;height:41.6px;background:#ffd37a;"></div>
<div class="a" style="left:1208.0px;top:255.0px;width:41.3px;height:12.5px;background:#ffd37a;"></div>
<div class="a" style="left:1249.3px;top:255.0px;width:17.7px;height:12.5px;background:#93c9c9;"></div>
<div class="a" style="left:1204.0px;top:267.5px;width:63.0px;height:7.2px;background:#a3a3fb;"></div>
<div class="a" style="left:1194.0px;top:274.7px;width:73.0px;height:6.8px;background:#93c9c9;"></div>
<div class="a" style="left:1166.3px;top:244.3px;width:21.7px;height:13.2px;background:#fff;border:1px solid #777;font-size:7.6px;line-height:10.7px;color:#111;padding-left:1.5px;white-space:nowrap;overflow:hidden">10</div>
<div class="a" style="left:1166.3px;top:281.5px;width:21.7px;height:13.2px;background:#fff;border:1px solid #777;font-size:7.6px;line-height:10.7px;color:#111;padding-left:1.5px;white-space:nowrap;overflow:hidden">10</div>
<div class="a" style="left:1192.0px;top:304.0px;width:21.8px;height:13.7px;background:#fff;border:1px solid #777;font-size:7.6px;line-height:11.2px;color:#111;padding-left:1.5px;white-space:nowrap;overflow:hidden">10</div>
<div class="t" style="left:1175.0px;top:259.3px;font-size:6.6px;color:#f03030;">f3</div>
<div class="t" style="left:1176.0px;top:268.7px;font-size:6.6px;color:#f03030;">f1</div>
<div class="t" style="left:1199.5px;top:294.2px;font-size:6.6px;color:#f03030;">f2</div>
<svg style="left:1100px;top:0" width="233" height="712" viewBox="1100 0 233 712"><g stroke="#1fd01f" stroke-width="1" fill="none"><path d="M1184 263 H1193.5 M1186.5 261.3 L1184.3 263 L1186.5 264.7 M1184 267 H1193.5 M1186.5 265.3 L1184.3 267 L1186.5 268.7"/><path d="M1184 271.5 H1193.5 M1186.5 269.8 L1184.3 271.5 L1186.5 273.2 M1184 275 H1193.5 M1186.5 273.3 L1184.3 275 L1186.5 276.7"/><path d="M1201 282.4 V292.8 M1204.2 282.4 V292.8 M1199 290.2 H1206.2"/></g></svg>
<div class="a" style="left:1112.0px;top:338.0px;width:204.8px;height:2.5px;background:#e8e8e8;border-top:1px solid #b0b0b0"></div>
<div class="a" style="left:1112.0px;top:340.5px;width:204.8px;height:13.2px;background:#a8a8a8;"></div>
<div class="t" style="left:1113.0px;top:343.6px;font-size:8.3px;color:#000;font-family:'Liberation Serif','Noto Serif CJK SC',serif;font-weight:bold">阴角节点</div>
<svg style="left:1306.5px;top:343.6px" width="6" height="7" viewBox="0 0 6 7"><path d="M0.5 0.5 L3 3 L5.5 0.5 M0.5 3.5 L3 6 L5.5 3.5" stroke="#000" stroke-width="1.2" fill="none"/></svg>
<div class="t" style="left:1128.0px;top:371.6px;font-size:8.3px;color:#000;font-family:'Liberation Serif','Noto Serif CJK SC',serif;">处理方式</div>
<div class="a" style="left:1195.3px;top:369px;width:103.5px;height:13.5px;background:linear-gradient(#f6f6f6,#dedede);border:1px solid #707070;border-radius:2px;font-size:8.3px;line-height:13.9px;color:#000;padding-left:2px;font-family:'Liberation Serif','Noto Serif CJK SC',serif;">竖直避让水平</div>
<svg style="left:1290.5px;top:374.8px" width="6" height="4" viewBox="0 0 6 4"><path d="M0 0.3 L6 0.3 L3 3.6 Z" fill="#111"/></svg>
<div class="a" style="left:1135.0px;top:392.2px;width:156.3px;height:124.4px;background:#f6f6f6;"></div>
<div class="a" style="left:1183.0px;top:424.8px;width:12.3px;height:21.1px;background:#93c9c9;"></div>
<div class="a" style="left:1195.3px;top:424.8px;width:7.2px;height:36.2px;background:#a3a3fb;"></div>
<div class="a" style="left:1202.5px;top:424.8px;width:6.7px;height:28.2px;background:#93c9c9;"></div>
<div class="a" style="left:1183.0px;top:445.9px;width:12.3px;height:38.4px;background:#ffd37a;"></div>
<div class="a" style="left:1183.0px;top:471.7px;width:38.2px;height:12.6px;background:#ffd37a;"></div>
<div class="a" style="left:1221.2px;top:471.7px;width:21.0px;height:12.6px;background:#93c9c9;"></div>
<div class="a" style="left:1199.5px;top:464.6px;width:42.7px;height:7.1px;background:#a3a3fb;"></div>
<div class="a" style="left:1206.7px;top:457.8px;width:35.5px;height:6.8px;background:#93c9c9;"></div>
<div class="a" style="left:1210.0px;top:409.3px;width:21.5px;height:13.9px;background:#fff;border:1px solid #777;font-size:7.6px;line-height:11.4px;color:#111;padding-left:1.5px;white-space:nowrap;overflow:hidden">10</div>
<div class="a" style="left:1233.0px;top:449.0px;width:21.5px;height:13.7px;background:#fff;border:1px solid #777;font-size:7.6px;line-height:11.2px;color:#111;padding-left:1.5px;white-space:nowrap;overflow:hidden">10</div>
<div class="a" style="left:1139.7px;top:456.8px;width:21.7px;height:13.2px;background:#fff;border:1px solid #777;font-size:7.6px;line-height:10.7px;color:#111;padding-left:1.5px;white-space:nowrap;overflow:hidden">10</div>
<div class="a" style="left:1206.0px;top:494.3px;width:21.0px;height:13.7px;background:#fff;border:1px solid #777;font-size:7.6px;line-height:11.2px;color:#111;padding-left:1.5px;white-space:nowrap;overflow:hidden">10</div>
<div class="t" style="left:1201.0px;top:408.5px;font-size:6.6px;color:#f03030;">f2</div>
<div class="t" style="left:1226.7px;top:449.6px;font-size:6.6px;color:#f03030;">f1</div>
<div class="t" style="left:1163.7px;top:458.6px;font-size:6.6px;color:#f03030;">f3</div>
<div class="t" style="left:1194.4px;top:495.8px;font-size:6.6px;color:#f03030;">f4</div>
<svg style="left:1100px;top:0" width="233" height="712" viewBox="1100 0 233 712"><g stroke="#1fd01f" stroke-width="1" fill="none"><path d="M1202.7 419 V435.8 M1206.5 419 V435.8 M1200.5 421 H1208.5"/><path d="M1209 452.3 H1223.8 M1209 457 H1223.8 M1222 450.3 V459"/><path d="M1174 460.5 H1182.5 M1174 466 H1182.5 M1175.8 458.5 V468"/><path d="M1195.5 484.3 V494.3 M1198.3 484.3 V494.3 M1193.5 492 H1200.3"/></g></svg>
<svg style="left:1321px;top:400px" width="5" height="6" viewBox="0 0 5 6"><path d="M0 0.5 H5 M0 2.5 H5 M0 4.5 H5" stroke="#888" stroke-width="0.8"/></svg>
<div class="a" style="left:1331.3px;top:683.0px;width:1.7px;height:6.5px;background:#111;"></div>
<div class="a" style="left:1329.3px;top:682.3px;width:1.0px;height:1.0px;background:#333;"></div>
<div class="a" style="left:1329.8px;top:692.5px;width:1.0px;height:1.3px;background:#222;"></div>
<div class="a" style="left:1331.8px;top:692.5px;width:1.0px;height:1.3px;background:#222;"></div>
<div class="a" style="left:1111.0px;top:689.8px;width:218.0px;height:16.2px;background:#e6e6e6;"></div>
<div class="a" style="left:1162.4px;top:689.5px;width:89.6px;height:14.5px;background:#fbfbfb;border:1px solid #d4d4d4;border-top:none"></div>
<div class="t" style="left:1115.0px;top:692.9px;font-size:8.3px;color:#555;">视图浏览器</div>
<div class="t" style="left:1166.0px;top:692.9px;font-size:8.3px;color:#3a3a3a;">节点处外叶和保温调整</div>
<svg style="left:9.0px;top:5.5px" width="12" height="12" viewBox="0 0 12 12" fill="none" stroke-linejoin="round"><path d="M1 0.8 H6.5 L9 3.3 V6 M1 0.8 V10.8 H5" stroke="#f4f4f4" stroke-width="1.1"/><circle cx="8.3" cy="8.7" r="2.9" fill="#f4f4f4"/><path d="M8.3 7 V10.4 M6.6 8.7 H10" stroke="#424242" stroke-width="1"/></svg>
<svg style="left:26.4px;top:6.8px" width="11" height="10" viewBox="0 0 11 10" fill="none" stroke-linejoin="round"><path d="M0.5 2 H4 L5 3.2 H8 V4.2 H10.5 L8.7 9.5 H0.5 Z" fill="#f4f4f4"/><path d="M7 2.6 L9.8 0.6 M9.8 0.6 H8 M9.8 0.6 V2.2" stroke="#f4f4f4" stroke-width="0.9"/></svg>
<svg style="left:43.7px;top:6.6px" width="10" height="10" viewBox="0 0 10 10" fill="none" stroke-linejoin="round"><rect x="0.6" y="0.6" width="8.8" height="8.8" stroke="#f4f4f4" stroke-width="1.1"/><rect x="2.4" y="0.6" width="5.2" height="3" fill="#f4f4f4"/><rect x="2.2" y="5.6" width="5.6" height="3.8" fill="#f4f4f4"/></svg>
<svg style="left:59.4px;top:6.4px" width="12" height="11" viewBox="0 0 12 11" fill="none" stroke-linejoin="round"><rect x="0.6" y="0.6" width="8.6" height="8.6" stroke="#f4f4f4" stroke-width="1.1"/><rect x="2.3" y="0.6" width="5" height="2.8" fill="#f4f4f4"/><rect x="2" y="5.2" width="4" height="3.6" fill="#f4f4f4"/><circle cx="8.8" cy="8" r="2.7" fill="#f4f4f4"/><circle cx="8.8" cy="8" r="1" fill="#424242"/></svg>
<svg style="left:77.0px;top:7.5px" width="10" height="9" viewBox="0 0 10 9" fill="none" stroke-linejoin="round"><path d="M1 3.2 H6.2 Q8.6 3.2 8.6 5.6 Q8.6 7.8 6 7.8 M3.4 0.8 L1 3.2 L3.4 5.6" stroke="#d0d0d0" stroke-width="1.1"/></svg>
<svg style="left:93.5px;top:7.5px" width="10" height="9" viewBox="0 0 10 9" fill="none" stroke-linejoin="round"><path d="M9 3.2 H3.8 Q1.4 3.2 1.4 5.6 Q1.4 7.8 4 7.8 M6.6 0.8 L9 3.2 L6.6 5.6" stroke="#8a8a8a" stroke-width="1.1"/></svg>
<div class="a" style="left:107.3px;top:4.6px;width:85.7px;height:13.6px;background:#fff"></div>
<div class="t" style="left:109px;top:7px;font-size:8.3px;color:#111">PC全功能版</div>
<svg style="left:185.5px;top:10.0px" width="5" height="4" viewBox="0 0 5 4" fill="none" stroke-linejoin="round"><path d="M0.3 0.5 H4.7 L2.5 3.3 Z" fill="#555"/></svg>
<svg style="left:196.8px;top:8.6px" width="5" height="6" viewBox="0 0 5 6" fill="none" stroke-linejoin="round"><path d="M0.5 0.5 H4.5" stroke="#e0e0e0" stroke-width="0.9"/><path d="M0.3 2.3 H4.7 L2.5 5 Z" fill="#e0e0e0"/></svg>
<svg style="left:1262.0px;top:4.0px" width="66" height="14" viewBox="0 0 66 14" fill="none" stroke-linejoin="round"><path d="M5.5 8.6 H9" stroke="#f4f4f4" stroke-width="1.3"/><path d="M30 6 H34 V9.6 H30 Z M31.2 5.8 V4.4 H35.4 V8 H34.2" stroke="#f4f4f4" stroke-width="0.9"/><path d="M53.3 4.2 L58 8.9 M58 4.2 L53.3 8.9" stroke="#f4f4f4" stroke-width="1.2"/></svg>
<svg style="left:1290.0px;top:29.0px" width="40" height="14" viewBox="0 0 40 14" fill="none" stroke-linejoin="round"><path d="M4.6 8.8 H8" stroke="#f4f4f4" stroke-width="1.3"/><path d="M17.6 6 H21.2 V9.8 H17.6 Z M18.8 5.8 V4.4 H22.4 V8.2 H21.4" stroke="#f4f4f4" stroke-width="0.9"/><path d="M30.4 4.8 L34.6 9 M34.6 4.8 L30.4 9" stroke="#f4f4f4" stroke-width="1.2"/></svg>
<svg style="left:757.5px;top:31.5px" width="9" height="11" viewBox="0 0 9 11" fill="none" stroke-linejoin="round"><path d="M4.5 0.8 A3.2 3.2 0 0 1 6.3 6.5 V8 H2.7 V6.5 A3.2 3.2 0 0 1 4.5 0.8 Z M3.2 9.6 H5.8" stroke="#e8e8e8" stroke-width="0.9"/></svg>
<svg style="left:9.0px;top:52.5px" width="11" height="11" viewBox="0 0 11 11" fill="none" stroke-linejoin="round"><path d="M2 9.5 V3 M4.2 9.5 V1.5 H5.8 V9.5 M8.6 9.5 V3 M0.8 9.5 H10 M2 5 H8.6" stroke="#6a6a6a" stroke-width="0.9"/><path d="M3.2 8 H5" stroke="#e04040" stroke-width="1"/></svg>
<svg style="left:9.0px;top:68.0px" width="11" height="11" viewBox="0 0 11 11" fill="none" stroke-linejoin="round"><path d="M0.8 1.8 H7.5 L3.2 9.5 H1.5 L5 3.4 H0.8 Z" stroke="#6a6a6a" stroke-width="0.9"/><path d="M8.6 1 V2.6 M9.8 1 V2.6" stroke="#6a6a6a" stroke-width="0.8"/></svg>
<svg style="left:9.0px;top:84.0px" width="11" height="11" viewBox="0 0 11 11" fill="none" stroke-linejoin="round"><path d="M1 3.8 H9 V10 H1 Z M1 5.4 H9 M3.4 5.4 V10 M1 3.8 L2.4 1.6 H10 L9 3.8 M10 1.6 V7.6 L9 9" stroke="#6a6a6a" stroke-width="0.8"/></svg>
<svg style="left:58.3px;top:57.2px" width="3.6" height="2.6" viewBox="0 0 3.6 2.6" fill="none" stroke-linejoin="round"><path d="M0.2 0.3 H3.4 L1.8 2.3 Z" fill="#444"/></svg>
<svg style="left:58.3px;top:72.7px" width="3.6" height="2.6" viewBox="0 0 3.6 2.6" fill="none" stroke-linejoin="round"><path d="M0.2 0.3 H3.4 L1.8 2.3 Z" fill="#444"/></svg>
<svg style="left:58.3px;top:88.7px" width="3.6" height="2.6" viewBox="0 0 3.6 2.6" fill="none" stroke-linejoin="round"><path d="M0.2 0.3 H3.4 L1.8 2.3 Z" fill="#444"/></svg>
<svg style="left:66.5px;top:52.5px" width="11" height="11" viewBox="0 0 11 11" fill="none" stroke-linejoin="round"><path d="M3.4 2.2 H10 L7.6 7.6 H1 Z M1 7.6 V8.8 H7.6 L10 3.4" stroke="#6a6a6a" stroke-width="0.9"/></svg>
<svg style="left:66.5px;top:68.0px" width="11" height="11" viewBox="0 0 11 11" fill="none" stroke-linejoin="round"><path d="M5.5 0.8 V10.2" stroke="#5aa88c" stroke-width="1"/><path d="M1 5.5 H10 M1.2 4.4 V6.6 M9.8 4.4 V6.6 M4.3 1 H6.7 M4.3 10 H6.7" stroke="#6a6a6a" stroke-width="0.8"/></svg>
<svg style="left:66.5px;top:84.0px" width="11" height="11" viewBox="0 0 11 11" fill="none" stroke-linejoin="round"><path d="M5.5 0.8 V10.2 M1 5.5 H10" stroke="#8a8a8a" stroke-width="1.6"/><path d="M5.5 0.8 V10.2" stroke="#6a6a6a" stroke-width="0.6"/></svg>
<svg style="left:124.5px;top:52.5px" width="11" height="11" viewBox="0 0 11 11" fill="none" stroke-linejoin="round"><path d="M1 10 V1.6 L9 2.6 V10 M1 1.6 L2.2 0.8 L10.2 1.8 V9.4 M9 2.6 L10.2 1.8" stroke="#6a6a6a" stroke-width="0.9"/></svg>
<svg style="left:124.5px;top:68.0px" width="11" height="11" viewBox="0 0 11 11" fill="none" stroke-linejoin="round"><path d="M0.8 3 L2.4 1.4 H10 V7.8 L8.6 9.6 H0.8 Z M0.8 3 H8.6 V9.6 M8.6 3 L10 1.4" stroke="#6a6a6a" stroke-width="0.9"/></svg>
<svg style="left:124.5px;top:84.0px" width="11" height="11" viewBox="0 0 11 11" fill="none" stroke-linejoin="round"><path d="M2 2 V3.6 M2 5 V6.6 M2 8 V9.6" stroke="#5aa88c" stroke-width="1.2"/><path d="M4.6 1.6 H9.6" stroke="#6a6a6a" stroke-width="1"/><path d="M5.2 6 L9 9.6 M9 6 L5.2 9.6" stroke="#e03030" stroke-width="1.2"/></svg>
<svg style="left:184.8px;top:57.2px" width="3.6" height="2.6" viewBox="0 0 3.6 2.6" fill="none" stroke-linejoin="round"><path d="M0.2 0.3 H3.4 L1.8 2.3 Z" fill="#444"/></svg>
<svg style="left:193.0px;top:52.5px" width="11" height="11" viewBox="0 0 11 11" fill="none" stroke-linejoin="round"><path d="M1 2 L2.6 0.8 H10 L9 2.6 H1 Z M1.6 3 V8.4 H8.4 V3 M8.4 8.4 L9.6 7 V2" stroke="#5aa88c" stroke-width="0.9"/></svg>
<svg style="left:193.0px;top:68.0px" width="11" height="11" viewBox="0 0 11 11" fill="none" stroke-linejoin="round"><path d="M1 7.2 L8 1 L10 1.8 L3 8.4 Z M1 7.2 V9 L3 10 V8.4 M3 10 L10 3.6 V1.8" stroke="#5aa88c" stroke-width="0.9"/></svg>
<svg style="left:193.0px;top:84.0px" width="11" height="11" viewBox="0 0 11 11" fill="none" stroke-linejoin="round"><path d="M0.8 1.6 H4.2 V9.4 H0.8 M6 3 H10 V9.4 H6 Z M2.4 3.6 V7.6 M7.6 4.8 V8" stroke="#5aa88c" stroke-width="0.9"/></svg>
<svg style="left:242.8px;top:57.2px" width="3.6" height="2.6" viewBox="0 0 3.6 2.6" fill="none" stroke-linejoin="round"><path d="M0.2 0.3 H3.4 L1.8 2.3 Z" fill="#444"/></svg>
<svg style="left:242.8px;top:72.7px" width="3.6" height="2.6" viewBox="0 0 3.6 2.6" fill="none" stroke-linejoin="round"><path d="M0.2 0.3 H3.4 L1.8 2.3 Z" fill="#444"/></svg>
<svg style="left:242.8px;top:88.7px" width="3.6" height="2.6" viewBox="0 0 3.6 2.6" fill="none" stroke-linejoin="round"><path d="M0.2 0.3 H3.4 L1.8 2.3 Z" fill="#444"/></svg>
<svg style="left:299.5px;top:52.5px" width="11" height="11" viewBox="0 0 11 11" fill="none" stroke-linejoin="round"><path d="M0.8 1.2 H7.6 V7.4 H0.8 Z M0.8 3.2 H7.6 M0.8 5.2 H7.6" stroke="#8a8a8a" stroke-width="0.8"/><path d="M6.4 7 L9.8 10.2 M9.8 7 L6.4 10.2" stroke="#e03030" stroke-width="1.2"/></svg>
<svg style="left:299.5px;top:68.0px" width="11" height="11" viewBox="0 0 11 11" fill="none" stroke-linejoin="round"><path d="M0.8 3.6 L2 2.2 H9.8 V8 L8.6 9.6 H0.8 Z M0.8 3.6 H8.6 V9.6" stroke="#6a6a6a" stroke-width="0.9"/><path d="M5.4 1 V3.4 M6.4 5.6 L7.6 7 L6.2 8" stroke="#5aa88c" stroke-width="0.9"/></svg>
<svg style="left:299.5px;top:84.0px" width="11" height="11" viewBox="0 0 11 11" fill="none" stroke-linejoin="round"><path d="M0.8 1.4 L4.4 2.6 L9.8 1 V8.2 L4.4 10 L0.8 8.6 Z" stroke="#5aa88c" stroke-width="0.9" fill="#cfe6dc"/><path d="M3 4 V8 M6.2 3.6 L7.6 5.4 L6.2 7.2" stroke="#5aa88c" stroke-width="0.9"/></svg>
<svg style="left:400.5px;top:52.5px" width="11" height="11" viewBox="0 0 11 11" fill="none" stroke-linejoin="round"><path d="M1 3 H8 M1 5 H8 M1 7 H8 M1 9 H8 M2.6 2 V9.6 M5.2 2 V9.6" stroke="#8a8a8a" stroke-width="0.8"/><path d="M7 3.4 L10 0.8" stroke="#5aa88c" stroke-width="1.2"/></svg>
<svg style="left:400.5px;top:68.0px" width="11" height="11" viewBox="0 0 11 11" fill="none" stroke-linejoin="round"><path d="M3 2.4 H10 L7.8 8.2 H0.8 Z" stroke="#8a8a8a" stroke-width="1"/></svg>
<svg style="left:546.5px;top:52.5px" width="11" height="11" viewBox="0 0 11 11" fill="none" stroke-linejoin="round"><path d="M0.8 3 L2 1.6 H9.8 V7.6 L8.6 9.4 H0.8 Z M0.8 3 H8.6 V9.4" stroke="#6a6a6a" stroke-width="0.8"/><rect x="3" y="4.6" width="4" height="3.2" fill="#5aa88c"/></svg>
<svg style="left:546.5px;top:68.0px" width="11" height="11" viewBox="0 0 11 11" fill="none" stroke-linejoin="round"><path d="M0.8 3 L2 1.6 H9.8 V7.6 L8.6 9.4 H0.8 Z M0.8 3 H8.6 V9.4" stroke="#6a6a6a" stroke-width="0.8"/><rect x="4" y="5" width="2" height="2.4" fill="#5aa88c"/></svg>
<svg style="left:546.5px;top:84.0px" width="11" height="11" viewBox="0 0 11 11" fill="none" stroke-linejoin="round"><path d="M1.4 1.4 H4 V10 H1.4 Z M4 1.4 H10 V4 H4" stroke="#8a8a8a" stroke-width="0.9"/><path d="M1.4 5.6 H4" stroke="#6a6a6a" stroke-width="0.8"/></svg>
<svg style="left:605.6px;top:57.2px" width="3.6" height="2.6" viewBox="0 0 3.6 2.6" fill="none" stroke-linejoin="round"><path d="M0.2 0.3 H3.4 L1.8 2.3 Z" fill="#444"/></svg>
<svg style="left:605.6px;top:72.7px" width="3.6" height="2.6" viewBox="0 0 3.6 2.6" fill="none" stroke-linejoin="round"><path d="M0.2 0.3 H3.4 L1.8 2.3 Z" fill="#444"/></svg>
<svg style="left:613.0px;top:52.5px" width="11" height="11" viewBox="0 0 11 11" fill="none" stroke-linejoin="round"><path d="M1 3 H8 M1 5 H8 M1 7 H8 M1 9 H8 M2.6 2 V9.6 M5.2 2 V9.6" stroke="#8a8a8a" stroke-width="0.8"/><path d="M7 3.4 L10 0.8" stroke="#5aa88c" stroke-width="1.2"/></svg>
<svg style="left:613.0px;top:68.0px" width="11" height="11" viewBox="0 0 11 11" fill="none" stroke-linejoin="round"><path d="M0.8 3.6 L2 2.2 H9.8 V8 L8.6 9.6 H0.8 Z M0.8 3.6 H8.6 V9.6" stroke="#6a6a6a" stroke-width="0.9"/><path d="M5.4 1 V3.4 M6.4 5.6 L7.6 7 L6.2 8" stroke="#5aa88c" stroke-width="0.9"/></svg>
<svg style="left:613.0px;top:84.0px" width="11" height="11" viewBox="0 0 11 11" fill="none" stroke-linejoin="round"><path d="M1.4 10 V2 L3 1 H4.6 V3.4 M7.4 3.4 V1.8 H9.6 V10 M4.6 3.4 L6 4.4 L7.4 3.4" stroke="#6a6a6a" stroke-width="0.8"/></svg>
<svg style="left:262.0px;top:51.0px" width="22" height="22" viewBox="0 0 22 22" fill="none" stroke-linejoin="round"><path d="M2 5.4 L9.6 1 L20.4 4.6 L12.6 9.4 Z M2 5.4 V7.6 L12.6 11.8 V9.4 M12.6 11.8 L20.4 6.8 V4.6" stroke="#4a4a4a" stroke-width="1"/><rect x="1.6" y="11.6" width="7" height="9" stroke="#4a4a4a" stroke-width="0.9" fill="#f1f1f1"/><path d="M3 14 H7.2 M3 16 H7.2 M3 18 H7.2" stroke="#4a4a4a" stroke-width="0.8"/><path d="M12.4 13.4 Q11 13.2 11.4 15 Q11.6 19.4 14.6 20.6 H18.4 Q20.6 18 19.4 14.4 L16.6 13 L15 12.4 L13.8 12.6" stroke="#5aa88c" stroke-width="0.9"/></svg>
<svg style="left:363.6px;top:51.0px" width="22" height="22" viewBox="0 0 22 22" fill="none" stroke-linejoin="round"><path d="M5 2 H18.4 L15 6.6 H1.6 Z M1.6 6.6 V7.8 H15 L18.4 3.2" stroke="#4a4a4a" stroke-width="1"/><path d="M18 8 V12" stroke="#5aa88c" stroke-width="1.3"/><path d="M16.2 11 H19.8 L18 13.6 Z" fill="#5aa88c"/><path d="M5 14.4 H12 L9 19.4 H1.6 Z M12 14.4 H19.6 M11 16.9 H19.6 M9 19.4 H19.6 M12 14.4 L9 19.4" stroke="#4a4a4a" stroke-width="1.1"/></svg>
<svg style="left:468.4px;top:51.0px" width="22" height="22" viewBox="0 0 22 22" fill="none" stroke-linejoin="round"><path d="M1.4 4 L6 1.2 L20.6 4.6 V17 L16 20.6 L1.4 16.6 Z M1.4 4 L16 7.8 V20.6 M16 7.8 L20.6 4.6" stroke="#4a4a4a" stroke-width="0.95"/><path d="M5.6 5.4 V17.6 M12 7 V19.4" stroke="#4a4a4a" stroke-width="0.8"/><path d="M6 10.6 L11.6 12 V19 L6 17.4 Z" fill="#5aa88c"/><path d="M6 14 L11.6 15.4" stroke="#f1f1f1" stroke-width="0.8"/></svg>
<svg style="left:509.7px;top:51.0px" width="22" height="22" viewBox="0 0 22 22" fill="none" stroke-linejoin="round"><path d="M1.4 5.4 L6.6 1.4 L20.6 5.4 V16.4 L16 20.6 L1.4 15.8 Z M1.4 5.4 L16 9.6 V20.6 M16 9.6 L20.6 5.4" stroke="#4a4a4a" stroke-width="0.95"/><path d="M8.6 12.8 L16.6 2.8 L18.4 4.2 L10.4 14.2 L8 15 Z" fill="#5aa88c" stroke="#f1f1f1" stroke-width="0.5"/></svg>
<svg style="left:676.5px;top:51.0px" width="22" height="22" viewBox="0 0 22 22" fill="none" stroke-linejoin="round"><path d="M1.6 11.4 L9 1.6 H12.4 L7.4 9 V15 L12.6 8 L17.4 1.6 H20.6 L13.4 11.4 V19.6 H1.6 Z M1.6 11.4 H5.2 V17 H9.8 V11.4 H13.4 M5.2 11.4 L11.4 2.8" stroke="#4a4a4a" stroke-width="1"/></svg>
<svg style="left:713.4px;top:51.0px" width="22" height="22" viewBox="0 0 22 22" fill="none" stroke-linejoin="round"><path d="M4 20.6 V5 L8 1.6 H17.6 V20.6 M4 5 H13.6 V20.6 M13.6 5 L17.6 1.6 M15.6 3.4 V20.6" stroke="#5aa88c" stroke-width="0.9"/></svg>
<svg style="left:757.0px;top:51.0px" width="22" height="22" viewBox="0 0 22 22" fill="none" stroke-linejoin="round"><path d="M9.6 1.4 L20.4 3.2 V19.8 L9.6 17.6 Z" fill="#b8b8b8"/><path d="M1.6 10.4 L9.6 7.4 L18.6 9 L10.4 12.6 Z M1.6 10.4 V12.4 L10.4 14.8 V12.6 M10.4 14.8 L18.6 11 V9" stroke="#5aa88c" stroke-width="0.9" fill="#dcebe4"/></svg>
<svg style="left:799.0px;top:51.0px" width="22" height="22" viewBox="0 0 22 22" fill="none" stroke-linejoin="round"><path d="M4 1.6 H17 V14 H4 Z" fill="#bdbdbd"/><path d="M8.6 2.6 L12.6 1.2 V12 L8.6 13.4 Z" stroke="#5aa88c" stroke-width="0.9" fill="#e6f0ec"/><path d="M2.4 11.4 L7.4 9.6 V13.2 L14.6 11 V7.4 L20 6 V15.4 L7.4 20.6 L2.4 18.6 Z M2.4 11.4 L7.4 13.2 V20.6 M14.6 7.4 L17 8.4 L20 6" stroke="#4a4a4a" stroke-width="0.95" fill="#f1f1f1"/></svg>
<svg style="left:841.7px;top:51.0px" width="22" height="22" viewBox="0 0 22 22" fill="none" stroke-linejoin="round"><path d="M9.6 3.4 L13 1.4 L20.4 3.2 L17.4 5.4 V7 M6.6 7.2 L9.6 5.2 V3.4 L17.4 5.4 M3.6 11 L6.6 9 V7.2 L14.4 9.2 L17.4 7 M14.4 9.2 V11 M1.4 14.8 L3.6 12.8 V11 L11.4 13 L14.4 11 M11.4 13 V15 M1.4 14.8 L9.4 17.4 L11.4 15 M1.4 14.8 V16.6 L9.4 19.6 V17.4 M9.4 19.6 L20.4 8.6 V3.2" stroke="#4a4a4a" stroke-width="0.95"/></svg>
<svg style="left:885.6px;top:51.0px" width="22" height="22" viewBox="0 0 22 22" fill="none" stroke-linejoin="round"><path d="M2 20.4 V2.6 L18 5.6 V20.4 M2 2.6 L4 1.4 L20 4.4 V20 M18 5.6 L20 4.4" stroke="#4a4a4a" stroke-width="1"/></svg>
<svg style="left:922.7px;top:51.0px" width="22" height="22" viewBox="0 0 22 22" fill="none" stroke-linejoin="round"><path d="M1.6 3.6 L5 1.4 L20.4 4.6 L18.4 7.2 L1.6 3.6 Z M1.6 3.6 V6 L18.4 9.8 V7.2 M18.4 9.8 L20.4 7.2 V4.6 M3.6 6.6 V15.6 L16.6 19.6 V9.6 M16.6 19.6 L18.6 17.4 V9.4" stroke="#5aa88c" stroke-width="0.95"/></svg>
<svg style="left:959.5px;top:51.0px" width="22" height="22" viewBox="0 0 22 22" fill="none" stroke-linejoin="round"><path d="M1.6 11.6 L15.4 1.4 L20.4 2.6 V8 L7 18.4 L1.6 16.6 Z M1.6 11.6 L7 13.2 V18.4 M7 13.2 L20.4 2.6 M4.4 15.8 V20.4 L7 21 V18.4" stroke="#4a4a4a" stroke-width="1"/></svg>
<svg style="left:996.5px;top:51.0px" width="22" height="22" viewBox="0 0 22 22" fill="none" stroke-linejoin="round"><path d="M1.6 2.4 L5.6 3.6 V17.6 L1.6 16 Z M5.6 3.6 L10.6 5 M5.6 17.6 L10.6 19" stroke="#4a4a4a" stroke-width="0.95"/><path d="M7 6.4 L14.4 4.4 V17.4 L7 19.4 Z M8.6 8.4 L12.8 7.4 V15.4 L8.6 16.6 Z M8.6 12.4 L12.8 11.4" stroke="#4a4a4a" stroke-width="0.95"/><path d="M14.4 4.4 L20.4 6.2 V19.6 L14.4 17.4 M17.4 5.4 V18.4" stroke="#4a4a4a" stroke-width="0.95"/></svg>
<svg style="left:1032.7px;top:51.0px" width="22" height="22" viewBox="0 0 22 22" fill="none" stroke-linejoin="round"><path d="M1.6 2.4 L5.6 3.6 V17.6 L1.6 16 Z M5.6 3.6 L10.6 5 M5.6 17.6 L10.6 19" stroke="#5aa88c" stroke-width="0.95"/><path d="M7 6.4 L14.4 4.4 V17.4 L7 19.4 Z M8.6 8.4 L12.8 7.4 V15.4 L8.6 16.6 Z M8.6 12.4 L12.8 11.4" stroke="#5aa88c" stroke-width="0.95"/><path d="M14.4 4.4 L20.4 6.2 V19.6 L14.4 17.4 M17.4 5.4 V18.4" stroke="#4a4a4a" stroke-width="0.95"/></svg>
<svg style="left:1073.0px;top:51.0px" width="22" height="22" viewBox="0 0 22 22" fill="none" stroke-linejoin="round"><path d="M2.4 8.6 L6.4 6 L14.4 7.4 V15.6 L10.4 19.4 L2.4 17.4 Z M2.4 8.6 L10.4 10.6 V19.4 M10.4 10.6 L14.4 7.4" stroke="#4a4a4a" stroke-width="1"/><path d="M4.6 11.6 L8.4 12.6 V16.4 L4.6 15.4 Z M12 9 L16 5" stroke="#5aa88c" stroke-width="0.9"/><path d="M15.6 3 L17.4 1.6 L20.4 2.2 V5.4 L18.6 6.8 L15.6 6.2 Z M15.6 3 L18.6 3.6 V6.8 M18.6 3.6 L20.4 2.2" stroke="#4a4a4a" stroke-width="0.8"/></svg>
<svg style="left:1115.0px;top:51.0px" width="22" height="22" viewBox="0 0 22 22" fill="none" stroke-linejoin="round"><path d="M2.4 4 L5 1.4 H10.4 V8.4 H17.4 L15 11 V17.4 H2.4 Z M2.4 4 H8 V11 H15 M8 4 L10.4 1.4" stroke="#4a4a4a" stroke-width="1"/><rect x="10.6" y="11.6" width="9" height="9" fill="#f1f1f1" stroke="#5aa88c" stroke-width="1"/><rect x="13.2" y="14.2" width="3.8" height="3.8" fill="#5aa88c"/></svg>
<svg style="left:1153.0px;top:51.0px" width="22" height="22" viewBox="0 0 22 22" fill="none" stroke-linejoin="round"><path d="M2.4 4 L5 1.4 H10.4 V8.4 H17.4 L15 11 V17.4 H2.4 Z M2.4 4 H8 V11 H15 M8 4 L10.4 1.4" stroke="#4a4a4a" stroke-width="1"/><rect x="10" y="12" width="11" height="9" fill="#f1f1f1" stroke="none"/><path d="M11.4 14.4 H19.6 M19.6 14.4 L17.4 12.4 M19.6 18 H11.4 M11.4 18 L13.6 20" stroke="#5aa88c" stroke-width="1.4"/></svg>
<div class="a" style="left:321.5px;top:119.5px;width:16.5px;height:16.5px;background:#d4d4d4"></div>
<svg style="left:233.6px;top:121.8px" width="12" height="12" viewBox="0 0 12 12" fill="none" stroke-linejoin="round"><path d="M1 3.6 V1 H3.6 M8.4 1 H11 V3.6 M11 8.4 V11 H8.4 M3.6 11 H1 V8.4" stroke="#4a4a4a" stroke-width="1" stroke-dasharray="1.6 0.8"/><path d="M6 2 V10 M2 6 H10 M3.6 3.6 H8.4 V8.4 H3.6 Z" stroke="#4a4a4a" stroke-width="1"/></svg>
<svg style="left:252.0px;top:121.8px" width="12" height="12" viewBox="0 0 12 12" fill="none" stroke-linejoin="round"><path d="M4 10.6 V4 Q4 1.2 6.4 1.2 Q9.4 1.2 9.4 4.6 V10.6 Z M5.8 1.6 V5 M7.6 1.6 V5 M4 6 H1.4 L2.6 8" stroke="#4a4a4a" stroke-width="0.95"/></svg>
<svg style="left:269.7px;top:121.8px" width="12" height="12" viewBox="0 0 12 12" fill="none" stroke-linejoin="round"><path d="M6 1 L8 3 L6 5 L4 3 Z M6 7 L8 9 L6 11 L4 9 Z M1 6 L3 4 L5 6 L3 8 Z M7 6 L9 4 L11 6 L9 8 Z" stroke="#4a4a4a" stroke-width="0.7"/></svg>
<svg style="left:287.6px;top:121.8px" width="12" height="12" viewBox="0 0 12 12" fill="none" stroke-linejoin="round"><path d="M1.4 4 H8 V11 H1.4 Z" fill="none" stroke="#4a4a4a" stroke-width="0.95"/><path d="M1.4 4 L4 1.4 H10.6 L8 4 Z" fill="none" stroke="#4a4a4a" stroke-width="0.95"/><path d="M8 4 L10.6 1.4 V8.4 L8 11 Z" fill="none" stroke="#4a4a4a" stroke-width="0.95"/></svg>
<svg style="left:304.5px;top:121.8px" width="12" height="12" viewBox="0 0 12 12" fill="none" stroke-linejoin="round"><path d="M1.4 4 H8 V11 H1.4 Z" fill="none" stroke="#4a4a4a" stroke-width="0.95"/><path d="M1.4 4 L4 1.4 H10.6 L8 4 Z" fill="none" stroke="#4a4a4a" stroke-width="0.95"/><path d="M8 4 L10.6 1.4 V8.4 L8 11 Z" fill="none" stroke="#4a4a4a" stroke-width="0.95"/><path d="M4 1.4 V8.4 H10.6 M4 8.4 L1.4 11" stroke="#4a4a4a" stroke-width="0.6"/></svg>
<svg style="left:323.7px;top:121.8px" width="12" height="12" viewBox="0 0 12 12" fill="none" stroke-linejoin="round"><path d="M1.4 4 H8 V11 H1.4 Z" fill="#5aaaf0" stroke="#222" stroke-width="0.95"/><path d="M1.4 4 L4 1.4 H10.6 L8 4 Z" fill="#a8d4ff" stroke="#222" stroke-width="0.95"/><path d="M8 4 L10.6 1.4 V8.4 L8 11 Z" fill="#2a7ad0" stroke="#222" stroke-width="0.95"/></svg>
<svg style="left:341.3px;top:121.8px" width="12" height="12" viewBox="0 0 12 12" fill="none" stroke-linejoin="round"><path d="M1.4 4 H8 V11 H1.4 Z" fill="#5aaaf0" stroke="#2a6fc0" stroke-width="0.95"/><path d="M1.4 4 L4 1.4 H10.6 L8 4 Z" fill="#a8d4ff" stroke="#2a6fc0" stroke-width="0.95"/><path d="M8 4 L10.6 1.4 V8.4 L8 11 Z" fill="#2a7ad0" stroke="#2a6fc0" stroke-width="0.95"/></svg>
<svg style="left:359.0px;top:121.8px" width="12" height="12" viewBox="0 0 12 12" fill="none" stroke-linejoin="round"><path d="M1.4 4 H8 V11 H1.4 Z" fill="#5aaaf0" stroke="none" stroke-width="0.95"/><path d="M1.4 4 L4 1.4 H10.6 L8 4 Z" fill="#a8d4ff" stroke="none" stroke-width="0.95"/><path d="M8 4 L10.6 1.4 V8.4 L8 11 Z" fill="#3a8ae0" stroke="none" stroke-width="0.95"/></svg>
<svg style="left:379.5px;top:123.5px" width="8" height="9" viewBox="0 0 8 9" fill="none" stroke-linejoin="round"><path d="M1 1 L4 4 L7 1 M1 4.6 L4 7.6 L7 4.6" stroke="#555" stroke-width="1"/></svg>
<svg style="left:295.0px;top:148.0px" width="350" height="44" viewBox="0 0 350 44" fill="none" stroke-linejoin="round"><rect x="9.7" y="13.9" width="20.3" height="5" fill="#ffd37a"/><rect x="9.7" y="13.9" width="4" height="5" fill="#93c9c9"/><rect x="26" y="13.9" width="4" height="5" fill="#93c9c9"/><rect x="17.6" y="18.9" width="6.4" height="5.4" fill="#ffd37a"/><rect x="17.6" y="24.3" width="6.4" height="4" fill="#93c9c9"/><path d="M16.5 28.6 H24.6" stroke="#333" stroke-width="1"/><path d="M9.4 13 Q10.4 16.4 9.4 19.8 M30.3 13 Q29.3 16.4 30.3 19.8" stroke="#566" stroke-width="0.7"/><rect x="41.89999999999998" y="18.6" width="20.3" height="5.7" fill="#ffd37a"/><rect x="41.89999999999998" y="18.6" width="4.5" height="5.7" fill="#93c9c9"/><rect x="57.699999999999974" y="18.6" width="4.5" height="5.7" fill="#93c9c9"/><path d="M41.59999999999998 17.6 Q42.799999999999976 21.4 41.59999999999998 25.2 M62.49999999999998 17.6 Q61.299999999999976 21.4 62.49999999999998 25.2" stroke="#566" stroke-width="0.7"/><circle cx="51.6" cy="21.6" r="1" fill="#20c020"/><path d="M53.6 23.6 V30.4 L55.3 28.8 L56.6 31.2 L57.5 30.7 L56.3 28.4 L58.6 28.2 Z" fill="#222"/><rect x="74.30000000000001" y="18.6" width="20.3" height="5.7" fill="#ffd37a"/><rect x="74.30000000000001" y="18.6" width="4.5" height="5.7" fill="#93c9c9"/><rect x="90.10000000000001" y="18.6" width="4.5" height="5.7" fill="#93c9c9"/><path d="M74.00000000000001 17.6 Q75.20000000000002 21.4 74.00000000000001 25.2 M94.9 17.6 Q93.70000000000002 21.4 94.9 25.2" stroke="#566" stroke-width="0.7"/><path d="M78.30000000000001 21.5 H90.80000000000001" stroke="#20c020" stroke-width="0.8"/><circle cx="78.60000000000001" cy="21.5" r="0.9" fill="#20c020"/><circle cx="90.30000000000001" cy="21.5" r="0.9" fill="#20c020"/><path d="M83.60000000000001 19.8 L86.60000000000001 21.5 L83.60000000000001 23.2 Z" fill="#20c020"/><rect x="106.5" y="18.6" width="20.3" height="5.7" fill="#ffd37a"/><rect x="106.5" y="18.6" width="4.5" height="5.7" fill="#93c9c9"/><rect x="122.3" y="18.6" width="4.5" height="5.7" fill="#93c9c9"/><path d="M106.2 17.6 Q107.4 21.4 106.2 25.2 M127.1 17.6 Q125.9 21.4 127.1 25.2" stroke="#566" stroke-width="0.7"/><circle cx="111" cy="21.5" r="1" fill="#20c020"/><circle cx="122.6" cy="21.5" r="1" fill="#20c020"/><text x="116.8" y="29.8" font-size="4.8" font-weight="bold" fill="#333" text-anchor="middle" font-family="Liberation Sans,sans-serif">Auto</text><rect x="150.2" y="18.6" width="20.3" height="5.7" fill="#93c9c9"/><rect x="150.2" y="18.6" width="4" height="5.7" fill="#ffd37a"/><rect x="166.5" y="18.6" width="4" height="5.7" fill="#ffd37a"/><path d="M149.89999999999998 17.6 Q151.1 21.4 149.89999999999998 25.2 M170.79999999999998 17.6 Q169.6 21.4 170.79999999999998 25.2" stroke="#566" stroke-width="0.7"/><path d="M154.2 21.5 H166.7" stroke="#20c020" stroke-width="0.8"/><circle cx="154.5" cy="21.5" r="0.9" fill="#20c020"/><circle cx="166.2" cy="21.5" r="0.9" fill="#20c020"/><path d="M159.5 19.8 L162.5 21.5 L159.5 23.2 Z" fill="#20c020"/><rect x="182.8" y="18.6" width="20.3" height="5.7" fill="#93c9c9"/><rect x="182.8" y="18.6" width="2.2" height="5.7" fill="#ffd37a"/><rect x="200.90000000000003" y="18.6" width="2.2" height="5.7" fill="#ffd37a"/><path d="M182.5 17.6 Q183.70000000000002 21.4 182.5 25.2 M203.4 17.6 Q202.20000000000002 21.4 203.4 25.2" stroke="#566" stroke-width="0.7"/><circle cx="187" cy="21.5" r="1" fill="#20c020"/><circle cx="199" cy="21.5" r="1" fill="#20c020"/><path d="M225.7 24.3 L231.5 16 L237.4 27 L243.9 19.3" stroke="#444" stroke-width="0.8"/><circle cx="225.7" cy="24.3" r="1.2" fill="#20c020"/><circle cx="231.5" cy="16" r="1.2" fill="#20c020"/><circle cx="237.4" cy="27" r="1.2" fill="#20c020"/><circle cx="243.9" cy="19.3" r="1.2" fill="#20c020"/><rect x="254" y="11.9" width="3.7" height="18.9" fill="#93c9c9"/><rect x="254" y="28.1" width="19.6" height="2.7" fill="#93c9c9"/><rect x="257.7" y="11.9" width="3.1" height="16.2" fill="#a3a3fb"/><rect x="257.7" y="24.3" width="15.9" height="3.8" fill="#a3a3fb"/><rect x="260.8" y="11.9" width="4.5" height="12.4" fill="#ffd37a"/><rect x="260.8" y="20" width="12.8" height="4.3" fill="#ffd37a"/><rect x="283" y="11.9" width="3" height="18.9" fill="#93c9c9"/><rect x="283" y="28.8" width="19.6" height="2" fill="#93c9c9"/><rect x="286.9" y="11.9" width="3" height="14.4" fill="#a3a3fb"/><rect x="287.8" y="25" width="14.8" height="3.1" fill="#a3a3fb"/><rect x="289.9" y="11.9" width="4.7" height="12.4" fill="#ffd37a"/><rect x="289.9" y="20" width="12.7" height="4.3" fill="#ffd37a"/><circle cx="331.7" cy="21" r="9.6" stroke="#555" stroke-width="0.9"/><path d="M327.7 17 L335.7 25 M335.7 17 L327.7 25" stroke="#555" stroke-width="0.9"/></svg>
<svg style="left:7.0px;top:707.0px" width="8" height="6" viewBox="0 0 8 6" fill="none" stroke-linejoin="round"><path d="M0.5 1 L7 4 L0.5 6 Z" fill="#3a7ad0"/></svg>
<div class="t" style="left:21.5px;top:708px;font-size:9.4px;color:#444">31868.18, -633.83, 4735.00</div>
<svg style="left:940.0px;top:706.0px" width="130" height="8" viewBox="0 0 130 8" fill="none" stroke-linejoin="round"><rect x="7.3" y="2.4" width="14.5" height="6" fill="#b9c6d6"/><rect x="8.5" y="3.2" width="5" height="3" fill="#3a6ab0"/><rect x="29.6" y="1.6" width="32.4" height="7" fill="#d2d2d2"/><path d="M41 8 L45 4 H52 L56 8" stroke="#444" stroke-width="1"/><path d="M66 2 V8" stroke="#444" stroke-width="1"/><path d="M81.6 3.4 H92 M81.6 6.6 H92 M81.6 3.4 V8 M86.8 3.4 V8 M92 3.4 V8" stroke="#444" stroke-width="0.9"/><path d="M100.5 8 L104 4.2 L107.5 8" fill="#999"/><path d="M117 8 V5.4 H118.6 V4 H121.4 V5.4 H123 V8" stroke="#555" stroke-width="0.9"/></svg>
<svg style="left:1165.0px;top:706.0px" width="165" height="8" viewBox="0 0 165 8" fill="none" stroke-linejoin="round"><path d="M4.4 8 V3 H8 L9.6 4.6 H13.7 V8" stroke="#555" stroke-width="1"/><path d="M27.6 8 V4 H38 V8 M28 6.4 H38" stroke="#555" stroke-width="1"/><path d="M49 8 V4 H61 V8 M49 6.4 H61" stroke="#555" stroke-width="1"/><path d="M74 8 V4.4 Q74 3.4 75 3.4 H84 Q85 3.4 85 4.4 V8 M78 6 V8 M81 6 V8" stroke="#555" stroke-width="1"/><path d="M129 5 H132 V8 H129 Z" stroke="#aaa" stroke-width="0.8"/><path d="M158 7 L159.5 6" stroke="#999" stroke-width="0.8"/></svg>
</body></html>
